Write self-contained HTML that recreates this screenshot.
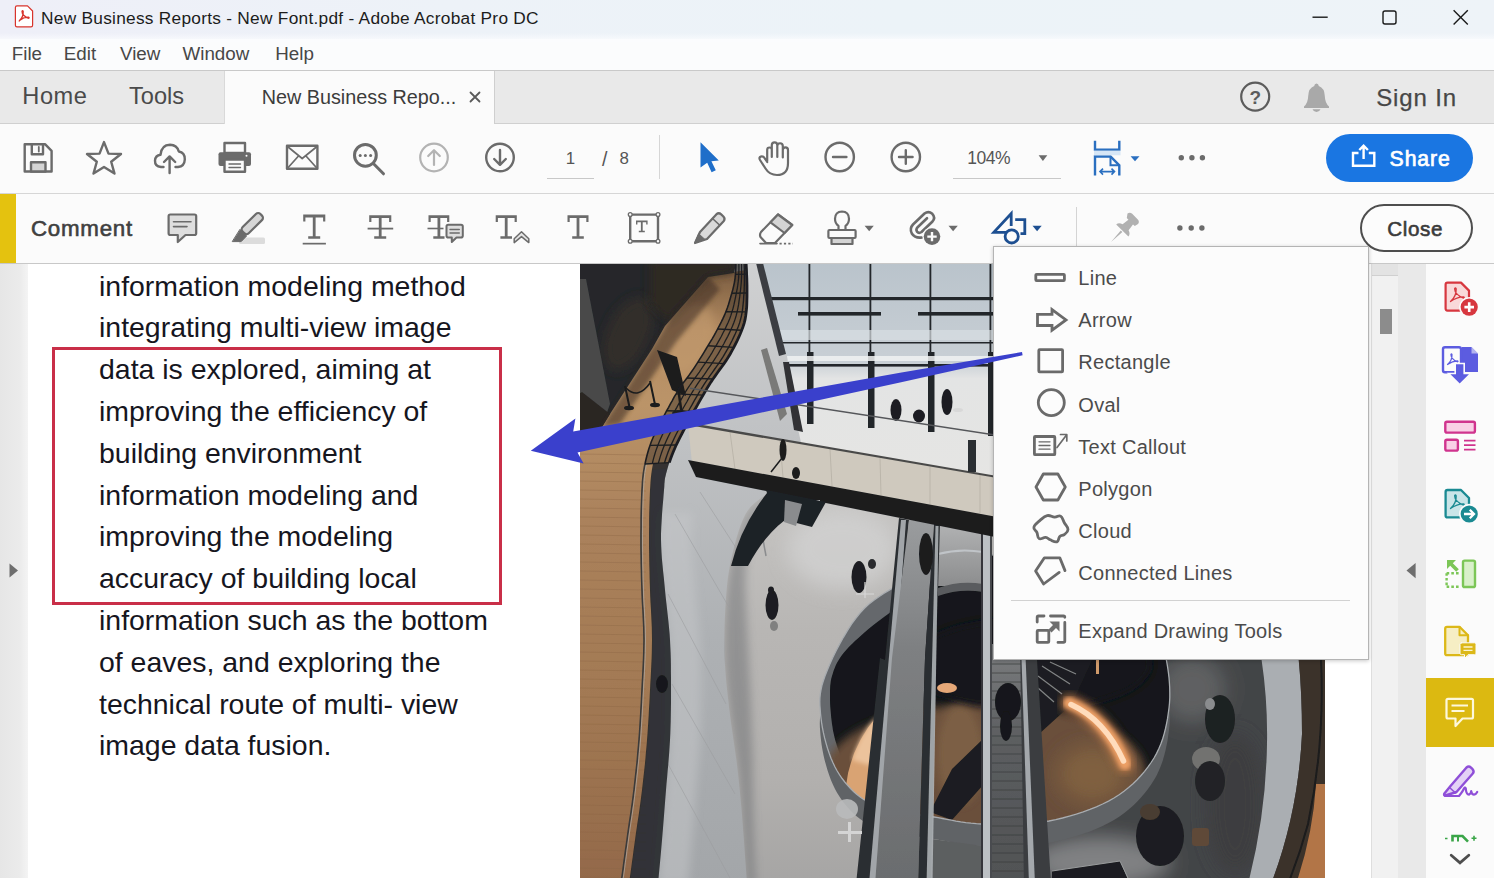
<!DOCTYPE html>
<html lang="en">
<head>
<meta charset="utf-8">
<title>New Business Reports - New Font.pdf - Adobe Acrobat Pro DC</title>
<style>
*{box-sizing:border-box;margin:0;padding:0}
html,body{width:1494px;height:878px;overflow:hidden;background:#fff}
body{font-family:"Liberation Sans",sans-serif;color:#3a3a3a;position:relative}
.abs{position:absolute}
.t{position:absolute;white-space:nowrap;line-height:1}
svg{position:absolute;overflow:visible}
#titlebar{left:0;top:0;width:1494px;height:39px;background:linear-gradient(90deg,#eeeff8 0%,#edf2f8 30%,#ecf3f8 60%,#eef3f8 100%)}
#titlefade{left:0;top:33px;width:1494px;height:9px;background:linear-gradient(180deg,rgba(251,252,254,0) 0%,#fbfcfe 100%)}
#menubar{left:0;top:39px;width:1494px;height:31px;background:#fbfcfd}
#menuline{left:0;top:70px;width:1494px;height:1px;background:#c9c9c9}
#tabbar{left:0;top:71px;width:1494px;height:53px;background:#e9e9e9}
#tabactive{left:224px;top:71px;width:271px;height:54px;background:#fbfbfb;border-left:1px solid #d9d9d9;border-right:1px solid #cfcfcf}
#tabline{left:0;top:123px;width:224px;height:1px;background:#d0d0d0}
#tabline2{left:495px;top:123px;width:999px;height:1px;background:#d0d0d0}
#tb1{left:0;top:124px;width:1494px;height:69px;background:#fbfbfb}
#tb1line{left:0;top:193px;width:1494px;height:1px;background:#d6d6d6}
#tb2{left:0;top:194px;width:1494px;height:69px;background:#fbfbfb}
#tb2line{left:0;top:263px;width:1494px;height:1px;background:#c8c8c8}
#ystrip{left:0;top:194px;width:16px;height:69px;background:#e4c20f}
#leftpane{left:0;top:264px;width:28px;height:614px;background:linear-gradient(90deg,#e6e6e6 0%,#ebebeb 70%,#f4f4f4 100%)}
#page{left:28px;top:264px;width:1343px;height:614px;background:#fff}
#doc{left:99px;top:265.7px;font-size:28.45px;line-height:41.8px;color:#16161e;white-space:nowrap}
#redrect{left:51.5px;top:347px;width:450.5px;height:258px;border:3px solid #c92f48}
#scroll{left:1371px;top:264px;width:27px;height:614px;background:#f1f1f1;border-left:1px solid #dedede}
#scrollbtn{left:1372px;top:264px;width:26px;height:12px;background:#e3e3e3;border-bottom:1px solid #d0d0d0}
#thumb{left:1380px;top:309px;width:12px;height:25px;background:#8c8c8c}
#rcollapse{left:1398px;top:264px;width:28px;height:614px;background:#e9e9e9}
#rpane{left:1426px;top:264px;width:68px;height:614px;background:#fbfbfb}
#rsel{left:1425.5px;top:677.5px;width:69px;height:69px;background:#dcb911}
#menu{left:993px;top:246px;width:376px;height:414px;background:#fcfcfc;border:1px solid #b4b4b4;box-shadow:0 1px 4px rgba(0,0,0,.22)}
#share{left:1326px;top:134px;width:147px;height:48px;border-radius:24px;background:#1a76e2}
#close{left:1360px;top:204px;width:113px;height:48px;border-radius:24px;border:2px solid #4e4e4e;background:#fcfcfc}

</style>
</head>
<body>
<div class="abs" id="titlebar"></div>
<div class="abs" id="menubar"></div>
<div class="abs" id="titlefade"></div>
<div class="abs" id="menuline"></div>
<div class="abs" id="tabbar"></div>
<div class="abs" id="tabactive"></div>
<div class="abs" id="tabline"></div>
<div class="abs" id="tabline2"></div>
<div class="abs" id="tb1"></div>
<div class="abs" id="tb1line"></div>
<div class="abs" id="tb2"></div>
<div class="abs" id="tb2line"></div>
<div class="abs" id="ystrip"></div>
<div class="abs" style="left:547px;top:178px;width:47px;height:1px;background:#c8c8c8"></div>
<div class="abs" style="left:659px;top:135px;width:1px;height:44px;background:#d6d6d6"></div>
<div class="abs" style="left:953px;top:178px;width:108px;height:1px;background:#c8c8c8"></div>
<div class="abs" id="share"></div>
<div class="abs" style="left:1076px;top:207px;width:1px;height:40px;background:#d4d4d4"></div>
<div class="abs" id="close"></div>

<div class="t" style="left:41.0px;top:9.56px;font-size:17.3px;color:#1c1c1c;letter-spacing:0.27px">New Business Reports - New Font.pdf - Adobe Acrobat Pro DC</div>
<div class="t" style="left:11.8px;top:44.99px;font-size:18.8px;color:#474747">File</div>
<div class="t" style="left:63.8px;top:44.99px;font-size:18.8px;color:#474747">Edit</div>
<div class="t" style="left:120.0px;top:44.99px;font-size:18.8px;color:#474747">View</div>
<div class="t" style="left:182.5px;top:44.99px;font-size:18.8px;color:#474747">Window</div>
<div class="t" style="left:275.3px;top:44.99px;font-size:18.8px;color:#474747">Help</div>
<div class="t" style="left:22.3px;top:85.42px;font-size:23.6px;color:#4a4a4a;letter-spacing:0.55px">Home</div>
<div class="t" style="left:129.0px;top:85.42px;font-size:23.6px;color:#4a4a4a">Tools</div>
<div class="t" style="left:261.7px;top:88.44px;font-size:19.8px;color:#3c3c3c">New Business Repo...</div>
<div class="t" style="left:1376.2px;top:86.18px;font-size:24px;color:#474747;letter-spacing:0.85px;-webkit-text-stroke:0.25px #474747">Sign In</div>
<div class="t" style="left:565.8px;top:151.09px;font-size:16.9px;color:#555">1</div>
<div class="t" style="left:602.0px;top:149.69px;font-size:19.5px;color:#555">/</div>
<div class="t" style="left:619.4px;top:151.09px;font-size:16.9px;color:#555">8</div>
<div class="t" style="left:967.2px;top:150.49px;font-size:17.5px;color:#555;letter-spacing:-0.5px">104%</div>
<div class="t" style="left:1389.6px;top:147.75px;font-size:21.2px;color:#fff;letter-spacing:0.9px;-webkit-text-stroke:0.7px #fff">Share</div>
<div class="t" style="left:31.0px;top:217.62px;font-size:22.3px;color:#404040;letter-spacing:0.75px;-webkit-text-stroke:0.6px #404040">Comment</div>
<div class="t" style="left:1387.3px;top:218.86px;font-size:20.6px;color:#3a3a3a;letter-spacing:0.6px;-webkit-text-stroke:0.6px #3a3a3a">Close</div>
<svg id="icons" style="left:0;top:0" width="1494" height="878" viewBox="0 0 1494 878" fill="none" stroke-linejoin="round" stroke-linecap="round">
<!-- title icon -->
<path d="M17,5.8 H27.5 L32.6,11 V25.2 Q32.6,26.8 31,26.8 H17 Q15.4,26.8 15.4,25.2 V7.4 Q15.4,5.8 17,5.8 Z" fill="#fff" stroke="#d8342c" stroke-width="1.2"/>
<path d="M19.5,20.5 Q23.5,17 23.2,11.2 Q22.6,10 22,11.2 Q22,15.5 28.5,18.3 Q29.8,17.6 28.5,17.2 Q24,17 19.5,20.5 Q19,21.6 19.5,20.5 Z" stroke="#d8342c" stroke-width="1.3"/>
<!-- window controls -->
<g stroke="#1a1a1a" stroke-width="1.4" stroke-linecap="butt">
<line x1="1312.5" y1="17.2" x2="1327.7" y2="17.2"/>
<rect x="1383" y="11" width="13" height="13" rx="2"/>
<path d="M1453.6,10.2 L1467.8,24.6 M1467.8,10.2 L1453.6,24.6"/>
</g>
<!-- tab close x -->
<path d="M470.5,92.5 L479.5,101.5 M479.5,92.5 L470.5,101.5" stroke="#5a5a5a" stroke-width="1.8"/>
<!-- help -->
<circle cx="1255.2" cy="96.6" r="14" stroke="#5c5c5c" stroke-width="2.2"/>
<text x="1255.2" y="103.8" font-family="Liberation Sans, sans-serif" font-size="19" font-weight="bold" fill="#5c5c5c" stroke="none" text-anchor="middle">?</text>
<!-- bell -->
<path d="M1316.5,83.5 Q1318.5,83.5 1318.8,86 Q1324.5,88 1324.8,96 Q1325,103 1329,106.5 V108 H1304 V106.5 Q1308,103 1308.2,96 Q1308.5,88 1314.2,86 Q1314.5,83.5 1316.5,83.5 Z" fill="#a9a9a9"/>
<path d="M1312.5,109.3 H1320.5 Q1319.5,112 1316.5,112 Q1313.5,112 1312.5,109.3 Z" fill="#a9a9a9"/>

<!-- ===== toolbar 1 ===== -->
<g stroke="#6b6b6b" stroke-width="2.4">
<!-- save -->
<path d="M24.7,144.2 H45 L51.6,150.8 V171.5 H24.7 Z"/>
<path d="M31.8,144.2 V154.2 H43 V144.2"/>
<rect x="31" y="162.2" width="14.5" height="9.3" fill="#d4d4d4"/>
<line x1="38.8" y1="147" x2="38.8" y2="151.5" stroke-width="1.8"/>
<!-- star -->
<polygon points="104.0,142.1 108.5,153.6 121.0,154.0 111.2,161.8 114.5,173.6 104.0,166.9 93.5,173.6 96.8,161.8 87.0,154.0 99.5,153.6"/>
<!-- cloud upload -->
<path d="M163.5,167 H161 Q154.8,166.5 155,160.5 Q155.4,155.5 160.5,154.8 Q161.5,145 170,144.8 Q177,145 178.8,151.5 Q185,152.5 184.8,159.5 Q184.5,166.5 178,167 H175.5"/>
<path d="M169.6,173 V157 M164,162 L169.6,156.4 L175.2,162"/>
<!-- printer -->
<rect x="224.5" y="143" width="20.5" height="10"/>
<path d="M220.5,152.2 H249 Q251,152.2 251,154.2 V164 Q251,166 249,166 H220.5 Q218.5,166 218.5,164 V154.2 Q218.5,152.2 220.5,152.2 Z" fill="#6b6b6b" stroke="none"/>
<rect x="224.5" y="159.5" width="20.5" height="12.2" fill="#fbfbfb"/>
<path d="M229,164 H240.5 M229,167.5 H240.5" stroke-width="1.4"/>
<circle cx="246.5" cy="155.8" r="1" fill="#fbfbfb" stroke="none"/>
<!-- mail -->
<rect x="287" y="145.8" width="30.4" height="23"/>
<path d="M287.5,146.5 L302.2,158.5 L317,146.5 M287.5,168.3 L298.5,156 M317,168.3 L306,156" stroke-width="1.7"/>
<!-- search -->
<circle cx="365.4" cy="155.3" r="10.9" stroke-width="3"/>
<path d="M373.6,163.8 L383.5,173.8" stroke-width="3"/>
<g fill="#6b6b6b" stroke="none"><circle cx="360.2" cy="155.5" r="1.5"/><circle cx="365.4" cy="155.5" r="1.5"/><circle cx="370.6" cy="155.5" r="1.5"/></g>
<!-- down circle -->
<circle cx="500" cy="157.5" r="13.8"/>
<path d="M500,150 V164.5 M494.2,159 L500,164.8 L505.8,159"/>
<!-- hand -->
<path d="M767.2,161 V149.8 A2.3,2.3 0 0 1 771.8,149.8 V157 M771.8,157 V145.2 A2.75,2.75 0 0 1 777.3,145.2 V157 M777.3,157 V146 A2.75,2.75 0 0 1 782.8,146 V157.5 M782.8,157.5 V150 A2.6,2.6 0 0 1 788,150 V163 Q788,175 777,175 Q769.5,175 765.5,168.5 L760,160 Q758.6,157.4 760.8,156.6 Q763.2,156 764.6,158.2 L767.2,162" stroke-width="2.2"/>
<!-- minus/plus circles -->
<circle cx="839.7" cy="157" r="14.2"/><path d="M833,157 H846.4"/>
<circle cx="905.8" cy="157" r="14.2"/><path d="M899,157 H912.6 M905.8,150.2 V163.8"/>
</g>
<!-- up circle (disabled) -->
<g stroke="#b3b3b3" stroke-width="2.2"><circle cx="434" cy="157.5" r="13.8"/><path d="M434,165 V150.5 M428.2,156 L434,150.2 L439.8,156"/></g>
<!-- pointer -->
<path d="M700.5,142.2 V167.4 L707.2,162.8 L711.6,172.2 L715.8,170.3 L711.4,161.2 L718.8,160.4 Z" fill="#1f6ec9"/>
<!-- zoom dropdown arrow -->
<path d="M1038.6,155.2 H1047.3 L1042.9,161 Z" fill="#6b6b6b"/>
<!-- fit icon -->
<g stroke="#2a6fc0" stroke-width="2.4" stroke-linecap="butt" stroke-linejoin="miter">
<path d="M1095,140.7 V149.6 H1119.3 V140.7"/>
<path d="M1095,175.6 V156.5 H1110.5 L1119.3,165.3 V175.6"/>
<path d="M1110.5,156.5 V165.3 H1119.3" stroke-width="2"/>
<path d="M1100,171.6 H1114.5 M1103,168.6 L1100,171.6 L1103,174.6 M1111.5,168.6 L1114.5,171.6 L1111.5,174.6" stroke-width="1.6"/>
</g>
<rect x="1094" y="150.8" width="26.5" height="4.5" fill="#d6e6f6"/>
<path d="M1130.6,156.2 H1139.5 L1135,161.2 Z" fill="#2a6fc0"/>
<g fill="#6b6b6b"><circle cx="1181.3" cy="157.8" r="2.7"/><circle cx="1191.9" cy="157.8" r="2.7"/><circle cx="1202.4" cy="157.8" r="2.7"/></g>
<!-- share icon -->
<g stroke="#fff" stroke-width="2.4" stroke-linecap="butt" stroke-linejoin="miter">
<path d="M1358.5,153 H1353 V165.8 H1374.3 V153 H1368.8"/>
<path d="M1363.6,159 V146.5 M1359.3,150 L1363.6,145.7 L1367.9,150" />
</g>

<!-- ===== toolbar 2 ===== -->
<g stroke="#6b6b6b" stroke-width="2.2">
<!-- comment bubble -->
<path d="M170.3,214.5 H194.5 Q196.2,214.5 196.2,216.2 V233.3 Q196.2,235 194.5,235 H185.5 L177.8,242 V235 H170.3 Q168.6,235 168.6,233.3 V216.2 Q168.6,214.5 170.3,214.5 Z" fill="#dedede"/>
<path d="M173.5,221.8 H191 M173.5,226.6 H187" stroke-width="1.6"/>
<!-- highlighter -->
<rect x="239" y="237.6" width="26" height="6.4" rx="1.5" fill="#dcdcdc" stroke="none"/>
<rect x="239.8" y="219.3" width="25" height="8.6" rx="3.2" fill="#d6d6d6" transform="rotate(-44.5 252.3 223.6)"/>
<path d="M240.2,229.6 L246.6,236 L241.2,241.6 H232.6 Z" fill="#6b6b6b" stroke-width="1"/>
<!-- pencil -->
<path d="M700,232 L716.5,214.2 Q718.8,212.2 721.2,214.4 L723.4,216.5 Q725.6,218.9 723.6,221.2 L707,239 L695,243 Z" fill="#dadada"/>
<path d="M712.5,218.5 L719.5,225" stroke-width="1.6"/>
<path d="M699,234 L705,239.5 L695,243 Z" fill="#6b6b6b" stroke-width="1"/>
<!-- eraser -->
<path d="M761,232 L778,214.5 L792.2,225 L775,243 H766 L760.5,237 Q759.3,234.5 761,232 Z" fill="#fbfbfb"/>
<path d="M770.5,222.3 L778,214.5 L792.2,225 L784.5,233 Z" fill="#d4d4d4"/>
<path d="M760,243.6 H777" stroke-width="1.6"/><path d="M779.5,243.6 H793" stroke-width="1.6" stroke-dasharray="2.2 2.2" stroke-linecap="butt"/>
<!-- stamp -->
<path d="M838.5,230 V226 Q835,223.5 835,218.8 Q835.2,211.6 842,211.5 Q848.8,211.6 849,218.8 Q849,223.5 845.5,226 V230"/>
<rect x="828.4" y="230" width="27.2" height="8" rx="1"/>
<rect x="831.5" y="238" width="21" height="6" fill="#d4d4d4"/>
<!-- paperclip -->
<path d="M922,237.5 Q915,238.5 911.8,233.5 Q909.3,228.5 913,224.5 L924.5,213.5 Q928.5,210.5 932.3,213.8 Q935.8,217.5 932.5,221.5 L921.5,232 Q918.8,233.8 917,231.6 Q915.6,229.3 917.6,227.2 L927,218.2" stroke-width="2.6"/>
</g>
<circle cx="932" cy="236.6" r="9.6" fill="#fbfbfb"/><circle cx="932" cy="236.6" r="8.3" fill="#6b6b6b"/>
<path d="M927.3,236.6 H936.7 M932,231.9 V241.3" stroke="#fbfbfb" stroke-width="2.4" stroke-linecap="butt"/>
<g fill="#6b6b6b"><path d="M864.6,225.8 H873.8 L869.2,231.2 Z"/><path d="M948.5,225.8 H957.8 L953.1,231.2 Z"/></g>
<!-- T icons: serif T glyph drawn by path -->
<g fill="#6b6b6b" stroke="none">
<path id="bigT" d="M303.2,214.6 H325.3 V221.4 H323.1 V217.4 H315.6 V236.2 H320.2 V238.7 H308.2 V236.2 H312.8 V217.4 H305.4 V221.4 H303.2 Z"/>
<rect x="302.7" y="242.8" width="23.2" height="1.7"/>
<path d="M369.2,215.2 H391.3 V222 H389.1 V218 H381.6 V236.2 H386.2 V238.7 H374.2 V236.2 H378.8 V218 H371.4 V222 H369.2 Z"/>
<rect x="367.6" y="227.7" width="25.6" height="1.8"/>
<path d="M428.5,215.2 H449.3 V222 H447.1 V218 H440.3 V236.2 H444.5 V238.7 H433.3 V236.2 H437.5 V218 H430.7 V222 H428.5 Z"/>
<rect x="427.5" y="227.7" width="16" height="1.6"/>
<path d="M495.7,215.2 H516.8 V222 H514.6 V218 H507.6 V236.2 H512 V238.7 H500.4 V236.2 H504.8 V218 H497.9 V222 H495.7 Z"/>
<path d="M567.5,215.2 H588.5 V222 H586.3 V218 H579.4 V236.2 H583.8 V238.7 H572.2 V236.2 H576.6 V218 H569.7 V222 H567.5 Z"/>
<path d="M636,220.6 H647.6 V224.6 H646.2 V222.2 H642.7 V230.8 H644.8 V232.3 H638.8 V230.8 H640.9 V222.2 H637.4 V224.6 H636 Z"/>
</g>
<!-- note on T -->
<path d="M448.3,224.8 H461 Q462.8,224.8 462.8,226.6 V235.8 Q462.8,237.6 461,237.6 H456.5 L451.8,242 V237.6 H448.3 Q446.5,237.6 446.5,235.8 V226.6 Q446.5,224.8 448.3,224.8 Z" fill="#dedede" stroke="#6b6b6b" stroke-width="2"/>
<path d="M450,229.5 H459.3 M450,233 H459.3" stroke="#6b6b6b" stroke-width="1.4"/>
<!-- caret on T -->
<path d="M514.2,242.6 V238.8 L521.5,231.8 L528.8,238.8 V242.6 L521.5,236.6 Z" fill="#e4e4e4" stroke="#6b6b6b" stroke-width="1.5"/>
<!-- T box -->
<rect x="630.2" y="214.6" width="27.8" height="26.6" stroke="#6b6b6b" stroke-width="2.4"/>
<g fill="#fbfbfb" stroke="#6b6b6b" stroke-width="1.3"><circle cx="630.2" cy="214.6" r="1.9"/><circle cx="658" cy="214.6" r="1.9"/><circle cx="630.2" cy="241.2" r="1.9"/><circle cx="658" cy="241.2" r="1.9"/></g>
<!-- shapes (active) -->
<g stroke="#1d4f91" stroke-width="2.8" stroke-linejoin="miter" stroke-linecap="butt">
<path d="M1010.8,232.4 H993.8 L1011.2,213.6 V226"/>
<path d="M1015.2,219.6 H1024.8 V233.6 H1020.5"/>
<circle cx="1011.7" cy="236.4" r="6.6" fill="#fbfbfb"/>
</g>
<path d="M1032.5,225.8 H1041.7 L1037.1,231.2 Z" fill="#1d4f91"/>
<!-- pin -->
<g fill="#b1b1b1" stroke="none">
<path d="M1127.5,213.5 Q1130,211.8 1132.2,213.8 L1137.8,219.4 Q1139.8,221.6 1138,224 L1134.8,226 L1133,224.4 L1128.6,230.2 Q1130.6,234 1128.4,236.6 L1116.2,224.4 Q1118.8,222.2 1122.6,224.2 L1128.4,219.8 L1126.8,218 Z"/>
<path d="M1120.8,230.4 L1122.4,232 L1111,242 Z"/>
</g>
<g fill="#6b6b6b"><circle cx="1179.9" cy="228" r="2.7"/><circle cx="1191.2" cy="228" r="2.7"/><circle cx="1201.9" cy="228" r="2.7"/></g>

</svg>

<!-- content -->
<div class="abs" id="leftpane"></div>
<div class="abs" id="page"></div>
<div class="abs" id="doc">information modeling method<br>integrating multi-view image<br>data is explored, aiming at<br>improving the efficiency of<br>building environment<br>information modeling and<br>improving the modeling<br>accuracy of building local<br>information such as the bottom<br>of eaves, and exploring the<br>technical route of multi- view<br>image data fusion.</div>
<div class="abs" id="redrect"></div>
<svg id="photo" style="left:580px;top:264px" width="745" height="614" viewBox="0 0 745 614">
<defs>
<clipPath id="pc"><rect width="745" height="614"/></clipPath>
<clipPath id="pitc"><rect x="447" y="380" width="300" height="240"/></clipPath>
<filter id="b1" x="-5%" y="-5%" width="110%" height="110%"><feGaussianBlur stdDeviation="0.6"/></filter>
<filter id="b2" x="-10%" y="-10%" width="120%" height="120%"><feGaussianBlur stdDeviation="2"/></filter>
<filter id="b4" x="-20%" y="-20%" width="140%" height="140%"><feGaussianBlur stdDeviation="4"/></filter>
<filter id="b10" x="-30%" y="-30%" width="160%" height="160%"><feGaussianBlur stdDeviation="10"/></filter>
<linearGradient id="gwood" x1="0" y1="0" x2="0" y2="1"><stop offset="0" stop-color="#7a5c40"/><stop offset="0.1" stop-color="#b48c62"/><stop offset="0.22" stop-color="#bb9468"/><stop offset="0.4" stop-color="#ab825c"/><stop offset="0.7" stop-color="#a27953"/><stop offset="1" stop-color="#93694a"/></linearGradient>
<linearGradient id="gwall" x1="0" y1="0" x2="0" y2="1"><stop offset="0" stop-color="#d0d1d2"/><stop offset="0.28" stop-color="#c0c2c4"/><stop offset="0.6" stop-color="#aeb1b4"/><stop offset="1" stop-color="#a3a6a9"/></linearGradient>
<linearGradient id="gfloor" x1="0" y1="0" x2="0" y2="1"><stop offset="0" stop-color="#c8c7c5"/><stop offset="0.4" stop-color="#b8b6b4"/><stop offset="0.75" stop-color="#b2b0ae"/><stop offset="1" stop-color="#a6a5a4"/></linearGradient>
<linearGradient id="gglass" x1="0" y1="0" x2="0" y2="1"><stop offset="0" stop-color="#b9c3cb"/><stop offset="0.36" stop-color="#c8cfd5"/><stop offset="0.42" stop-color="#e3e4e4"/><stop offset="1" stop-color="#e7e6e3"/></linearGradient>
<linearGradient id="gsteps" x1="0" y1="0" x2="0" y2="1"><stop offset="0" stop-color="#9a9c9e"/><stop offset="0.35" stop-color="#7e8082"/><stop offset="1" stop-color="#6a6c6e"/></linearGradient>
<linearGradient id="gpanel" x1="0" y1="0" x2="0" y2="1"><stop offset="0" stop-color="#b2b3b4"/><stop offset="1" stop-color="#8c8d8e"/></linearGradient>
<radialGradient id="gpitwood" cx="0.4" cy="0.7" r="0.65"><stop offset="0" stop-color="#94704c"/><stop offset="0.6" stop-color="#6e5238"/><stop offset="1" stop-color="#241f1c"/></radialGradient>
</defs>
<g clip-path="url(#pc)">
<g filter="url(#b1)">
<rect x="-5" y="-5" width="755" height="624" fill="#9a9c9e"/>
<polygon points="170,-5 750,-5 750,280 215,200" fill="url(#gglass)"/>
<polygon points="140,200 420,240 420,620 150,620" fill="url(#gfloor)"/>
<ellipse cx="262" cy="285" rx="55" ry="40" fill="#d4d4d4" opacity="0.7" filter="url(#b10)"/>
<polygon points="187.0,229.0 184.2,231.6 181.3,233.8 178.4,236.0 175.6,238.2 172.7,240.7 170.0,243.5 167.4,246.9 165.0,251.0 162.7,255.9 160.5,261.5 158.4,267.7 156.4,274.2 154.6,281.0 152.9,287.8 151.3,294.6 150.0,301.0 148.9,307.2 147.9,313.5 147.2,319.8 146.6,326.0 146.1,332.2 145.7,338.5 145.3,344.8 145.0,351.0 144.7,357.2 144.5,363.5 144.4,369.8 144.4,376.0 144.4,382.2 144.5,388.5 144.7,394.8 145.0,401.0 145.4,407.2 145.9,413.5 146.4,419.8 147.1,426.0 147.8,432.2 148.5,438.5 149.2,444.8 150.0,451.0 150.8,457.2 151.7,463.5 152.6,469.8 153.5,476.0 154.4,482.2 155.3,488.5 156.2,494.8 157.0,501.0 157.7,507.1 158.4,513.1 159.0,518.9 159.6,524.8 160.2,530.9 160.8,537.2 161.4,543.8 162.0,551.0 162.6,558.7 163.2,566.9 163.9,575.5 164.5,584.3 165.1,593.3 165.8,602.3 166.4,611.2 167.0,620.0 175.6,620.0 175.1,611.2 174.7,602.3 174.3,593.3 174.0,584.3 173.8,575.5 173.6,566.9 173.4,558.7 173.3,551.0 173.2,543.8 173.1,537.2 173.1,530.9 173.0,524.8 173.0,518.9 173.0,513.1 172.9,507.1 172.9,501.0 172.8,494.8 172.6,488.5 172.4,482.2 172.2,476.0 172.0,469.8 171.7,463.5 171.5,457.2 171.4,451.0 171.2,444.8 170.9,438.5 170.6,432.2 170.3,426.0 170.0,419.8 169.7,413.5 169.3,407.2 169.0,401.0 168.7,394.8 168.4,388.5 168.1,382.2 167.7,376.0 167.4,369.8 167.1,363.5 166.8,357.2 166.5,351.0 166.3,344.8 166.0,338.5 165.7,332.2 165.5,326.0 165.4,319.8 165.4,313.5 165.7,307.2 166.1,301.0 166.7,294.6 167.6,287.8 168.6,281.0 169.8,274.2 171.2,267.7 172.7,261.5 174.5,255.9 176.4,251.0 178.6,246.9 180.9,243.5 183.5,240.7 186.2,238.2 188.9,236.0 191.7,233.8 194.4,231.6 197.1,229.0" fill="#4c4f54" opacity="0.34" filter="url(#b4)"/>
<g fill="#23262a">
<rect x="190" y="33" width="560" height="3.2"/>
<rect x="218" y="48" width="83" height="3.6"/><rect x="338" y="48" width="80" height="3.6"/>
<rect x="196" y="78" width="554" height="1.5"/>
<rect x="203" y="100" width="547" height="2.6"/>
<rect x="228.5" y="0" width="1.8" height="90"/><rect x="227" y="88" width="6.5" height="72"/>
<rect x="289.5" y="0" width="1.8" height="90"/><rect x="288" y="88" width="6.5" height="76"/>
<rect x="349.5" y="0" width="1.8" height="90"/><rect x="348" y="88" width="6.5" height="80"/>
<rect x="409.5" y="0" width="1.8" height="90"/><rect x="408" y="88" width="6.5" height="84"/>
</g>
<rect x="200" y="92" width="550" height="5" fill="#f0f2f2" opacity="0.85"/>
<rect x="196" y="66" width="554" height="10" fill="#d9dee2" opacity="0.7"/>
<ellipse cx="316" cy="146" rx="5.5" ry="11" fill="#1c1e22"/><ellipse cx="339" cy="152" rx="6" ry="6.5" fill="#1c1e22"/><ellipse cx="367" cy="138" rx="5.5" ry="13" fill="#1c1e22"/><ellipse cx="378" cy="146" rx="5" ry="2" fill="#d8d8d8"/>
<polygon points="166.0,-5.0 176.0,-5.0 207.0,92.0 218.0,165.0 232.0,228.0 187.0,229.0 184.2,231.6 181.3,233.8 178.4,236.0 175.6,238.2 172.7,240.7 170.0,243.5 167.4,246.9 165.0,251.0 162.7,255.9 160.5,261.5 158.4,267.7 156.4,274.2 154.6,281.0 152.9,287.8 151.3,294.6 150.0,301.0 148.9,307.2 147.9,313.5 147.2,319.8 146.6,326.0 146.1,332.2 145.7,338.5 145.3,344.8 145.0,351.0 144.7,357.2 144.5,363.5 144.4,369.8 144.4,376.0 144.4,382.2 144.5,388.5 144.7,394.8 145.0,401.0 145.4,407.2 145.9,413.5 146.4,419.8 147.1,426.0 147.8,432.2 148.5,438.5 149.2,444.8 150.0,451.0 150.8,457.2 151.7,463.5 152.6,469.8 153.5,476.0 154.4,482.2 155.3,488.5 156.2,494.8 157.0,501.0 157.7,507.1 158.4,513.1 159.0,518.9 159.6,524.8 160.2,530.9 160.8,537.2 161.4,543.8 162.0,551.0 162.6,558.7 163.2,566.9 163.9,575.5 164.5,584.3 165.1,593.3 165.8,602.3 166.4,611.2 167.0,620.0 78.0,620.0 78.0,620.0 78.5,614.5 79.0,609.1 79.5,603.8 80.0,598.4 80.5,592.9 81.0,587.4 81.5,581.8 82.0,576.0 82.5,570.0 83.0,563.9 83.5,557.7 84.0,551.4 84.5,545.0 85.0,538.6 85.5,532.3 86.0,526.0 86.5,519.8 87.1,513.5 87.6,507.2 88.2,501.0 88.7,494.8 89.2,488.5 89.6,482.2 90.0,476.0 90.3,469.8 90.5,463.5 90.7,457.2 90.8,451.0 90.9,444.8 91.0,438.5 91.0,432.2 91.0,426.0 91.0,419.8 91.0,413.5 90.9,407.2 90.9,401.0 90.8,394.8 90.6,388.5 90.3,382.2 90.0,376.0 89.6,369.8 89.0,363.5 88.4,357.2 87.7,351.0 87.0,344.8 86.3,338.5 85.6,332.2 85.0,326.0 84.4,319.8 83.8,313.5 83.1,307.2 82.5,301.0 81.9,294.8 81.5,288.5 81.2,282.2 81.0,276.0 81.0,269.5 81.3,262.7 81.7,255.8 82.1,248.9 82.6,242.3 83.2,236.1 83.6,230.6 84.0,226.0 84.3,222.4 84.4,219.8 84.6,217.9 84.7,216.4 84.9,215.1 85.1,213.8 85.5,212.2 86.0,210.0 86.7,207.4 87.5,204.6 88.3,201.7 89.3,198.6 90.4,195.5 91.5,192.3 92.7,189.2 94.0,186.0 95.4,182.8 96.9,179.5 98.6,176.1 100.3,172.8 102.1,169.4 103.8,166.1 105.4,163.0 107.0,160.0 108.5,157.2 109.8,154.6 111.2,152.1 112.5,149.8 113.8,147.4 115.2,145.0 116.5,142.6 118.0,140.0 119.5,137.4 121.0,134.7 122.5,132.1 124.1,129.4 125.7,126.6 127.4,123.8 129.1,121.0 131.0,118.0 133.1,114.9 135.3,111.7 137.6,108.5 140.1,105.1 142.5,101.8 144.8,98.5 147.0,95.2 149.0,92.0 150.8,88.9 152.6,85.7 154.2,82.6 155.8,79.5 157.3,76.5 158.6,73.5 159.9,70.7 161.0,68.0 162.0,65.5 162.8,63.2 163.6,61.1 164.2,59.1 164.7,57.0 165.2,54.9 165.6,52.5 166.0,50.0 166.3,47.2 166.6,44.4 166.8,41.4 166.9,38.2 166.9,35.0 167.0,31.8 167.0,28.4 167.0,25.0 167.0,21.5 166.9,17.9 166.8,14.1 166.6,10.3 166.5,6.5 166.3,2.6 166.1,-1.2 166.0,-5.0" fill="url(#gwall)"/>
<polygon points="82.2,248.5 81.5,259.5 81.0,270.4 81.1,281.4 81.8,292.3 82.7,303.2 83.8,314.1 84.9,325.0 86.0,335.9 87.2,346.8 88.4,357.7 89.5,368.6 90.2,379.5 90.6,390.5 90.9,401.4 91.0,412.4 91.0,423.3 91.0,434.3 90.9,445.2 90.7,456.2 90.4,467.2 89.9,478.1 89.2,489.0 88.3,499.9 87.3,510.9 86.4,521.8 85.5,532.7 84.6,543.6 83.8,554.5 82.9,565.4 82.0,576.4 81.0,587.3 80.0,598.2 79.0,609.1 78.0,620.0 108.0,620.0 109.0,609.1 110.0,598.2 111.0,587.3 112.0,576.4 112.9,565.4 113.8,554.5 114.6,543.6 115.5,532.7 116.4,521.8 117.3,510.9 118.3,499.9 119.2,489.0 119.9,478.1 120.4,467.2 120.7,456.2 120.9,445.2 121.0,434.3 121.0,423.3 121.0,412.4 120.9,401.4 120.6,390.5 120.2,379.5 119.5,368.6 118.4,357.7 117.2,346.8 116.0,335.9 114.9,325.0 113.8,314.1 112.7,303.2 111.8,292.3 111.1,281.4 111.0,270.4 111.5,259.5 112.2,248.5" fill="#c6c8ca" opacity="0.5" filter="url(#b4)"/>
<g stroke="#9a9c9e" stroke-width="0.8" opacity="0.7"><line x1="95" y1="250" x2="150" y2="345"/><line x1="88" y1="330" x2="146" y2="440"/><line x1="92" y1="420" x2="155" y2="530"/><line x1="88" y1="500" x2="150" y2="614"/><line x1="120" y1="228" x2="160" y2="290"/></g>
<polygon points="181,86 187,84 207,150 200,157" fill="#7a7a78"/>
<polygon points="175,-5 182,-5 206,90 199,92" fill="#3a3e42"/><polygon points="203,98 209,98 223,168 214,166" fill="#303336"/>
<polygon points="128.0,12.0 154.0,8.0 166.0,6.0 165.5,6.5 165.6,10.3 165.8,14.1 165.9,17.9 166.0,21.5 166.0,25.0 166.0,28.4 166.0,31.8 165.9,35.0 165.9,38.2 165.8,41.4 165.6,44.4 165.3,47.2 165.0,50.0 164.6,52.5 164.2,54.9 163.7,57.0 163.2,59.1 162.6,61.1 161.8,63.2 161.0,65.5 160.0,68.0 158.9,70.7 157.6,73.5 156.3,76.5 154.8,79.5 153.2,82.6 151.6,85.7 149.8,88.9 148.0,92.0 146.0,95.2 143.8,98.5 141.5,101.8 139.1,105.1 136.6,108.5 134.3,111.7 132.1,114.9 130.0,118.0 128.1,121.0 126.4,123.8 124.7,126.6 123.1,129.4 121.5,132.1 120.0,134.7 118.5,137.4 117.0,140.0 115.5,142.6 114.2,145.0 112.8,147.4 111.5,149.8 110.2,152.1 108.8,154.6 107.5,157.2 106.0,160.0 104.4,163.0 102.8,166.1 101.1,169.4 99.3,172.8 97.6,176.1 95.9,179.5 94.4,182.8 93.0,186.0 91.7,189.2 90.5,192.3 89.4,195.5 88.3,198.6 87.3,201.7 86.5,204.6 72.9,205.8 72.5,208.5 72.1,211.4 71.8,214.4 71.5,217.8 71.3,221.6 71.0,226.0 70.8,231.1 70.6,236.8 70.4,243.0 70.2,249.5 70.1,256.2 70.1,262.9 70.0,269.6 70.0,276.0 70.0,282.2 70.1,288.5 70.2,294.8 70.3,301.0 70.5,307.2 70.6,313.5 70.8,319.8 71.0,326.0 71.2,332.2 71.5,338.5 71.9,344.8 72.2,351.0 72.5,357.2 72.8,363.5 72.9,369.8 73.0,376.0 72.9,382.2 72.8,388.5 72.6,394.8 72.3,401.0 72.0,407.2 71.7,413.5 71.3,419.8 71.0,426.0 70.7,432.2 70.4,438.5 70.0,444.8 69.7,451.0 69.3,457.2 68.9,463.5 68.5,469.8 68.0,476.0 67.5,482.2 66.9,488.5 66.4,494.8 65.8,501.0 65.1,507.2 64.4,513.5 63.7,519.8 63.0,526.0 62.2,532.3 61.4,538.6 60.5,545.0 59.6,551.4 58.6,557.7 57.7,563.9 56.8,570.0 56.0,576.0 55.2,581.8 54.4,587.4 53.7,592.9 52.9,598.4 52.2,603.8 51.5,609.1 50.7,614.5 50.0,620.0 -5.0,620.0 -5.0,172.0 22.0,163.0 30.0,150.0 72.0,85.0 85.0,62.0" fill="url(#gwood)"/>
<g stroke="#8a6444" stroke-width="1" opacity="0.35"><line x1="0" y1="190" x2="66" y2="191"/><line x1="0" y1="199" x2="66" y2="200"/><line x1="0" y1="208" x2="66" y2="209"/><line x1="0" y1="217" x2="66" y2="218"/><line x1="0" y1="226" x2="66" y2="227"/><line x1="0" y1="235" x2="66" y2="236"/><line x1="0" y1="244" x2="66" y2="245"/><line x1="0" y1="253" x2="66" y2="254"/><line x1="0" y1="262" x2="66" y2="263"/><line x1="0" y1="271" x2="66" y2="272"/><line x1="0" y1="280" x2="66" y2="281"/><line x1="0" y1="289" x2="66" y2="290"/><line x1="0" y1="298" x2="66" y2="299"/><line x1="0" y1="307" x2="66" y2="308"/><line x1="0" y1="316" x2="66" y2="317"/><line x1="0" y1="325" x2="66" y2="326"/><line x1="0" y1="334" x2="66" y2="335"/><line x1="0" y1="343" x2="66" y2="344"/><line x1="0" y1="352" x2="66" y2="353"/><line x1="0" y1="361" x2="66" y2="362"/><line x1="0" y1="370" x2="66" y2="371"/><line x1="0" y1="379" x2="66" y2="380"/><line x1="0" y1="388" x2="66" y2="389"/><line x1="0" y1="397" x2="66" y2="398"/><line x1="0" y1="406" x2="66" y2="407"/><line x1="0" y1="415" x2="66" y2="416"/><line x1="0" y1="424" x2="66" y2="425"/><line x1="0" y1="433" x2="66" y2="434"/><line x1="0" y1="442" x2="66" y2="443"/><line x1="0" y1="451" x2="66" y2="452"/><line x1="0" y1="460" x2="66" y2="461"/><line x1="0" y1="469" x2="66" y2="470"/><line x1="0" y1="478" x2="66" y2="479"/><line x1="0" y1="487" x2="66" y2="488"/><line x1="0" y1="496" x2="66" y2="497"/><line x1="0" y1="505" x2="66" y2="506"/><line x1="0" y1="514" x2="66" y2="515"/><line x1="0" y1="523" x2="66" y2="524"/><line x1="0" y1="532" x2="66" y2="533"/><line x1="0" y1="541" x2="66" y2="542"/><line x1="0" y1="550" x2="66" y2="551"/><line x1="0" y1="559" x2="66" y2="560"/><line x1="0" y1="568" x2="66" y2="569"/><line x1="0" y1="577" x2="66" y2="578"/><line x1="0" y1="586" x2="66" y2="587"/><line x1="0" y1="595" x2="66" y2="596"/><line x1="0" y1="604" x2="66" y2="605"/><line x1="0" y1="613" x2="66" y2="614"/></g>
<ellipse cx="105" cy="75" rx="26" ry="38" fill="#c49c70" opacity="0.55" transform="rotate(32 105 75)" filter="url(#b4)"/>
<path d="M-5,-5 L157,-5 L154,9 L128,13 L85,62 L72,85 L30,150 L22,163 L-5,174 Z" fill="#25272a"/>
<ellipse cx="48" cy="70" rx="22" ry="40" fill="#332e2a" opacity="0.9" filter="url(#b4)" transform="rotate(25 48 70)"/>
<path d="M70,-5 L157,-5 L154,9 L128,13 L88,58 L70,40 Z" fill="#332c24" opacity="0.8" filter="url(#b4)"/>
<polygon points="-5,15 6,15 30,140 22,163 -5,174" fill="#484a4a"/>
<polygon points="2,128 30,150 22,163 -5,174 -5,132" fill="#2b2624"/>
<path d="M128,13 L85,62 L72,85 L30,150 L22,163 L40,160 L96,78 L140,25 Z" fill="#3a2c20" opacity="0.55" filter="url(#b2)"/>
<polygon points="77,86 97,93 106,132 92,126" fill="#1a1c1f"/>
<rect x="97" y="125" width="2.5" height="24" fill="#1a1c1f" transform="rotate(-8 98 125)"/>
<ellipse cx="100" cy="149" rx="8" ry="3" fill="#2a2a2a"/>
<rect x="44" y="122" width="2" height="22" fill="#1a1c1f" transform="rotate(-12 45 122)"/><ellipse cx="49" cy="144" rx="5" ry="2.2" fill="#1a1c1f"/>
<rect x="69" y="117" width="2" height="24" fill="#1a1c1f" transform="rotate(-12 70 117)"/><ellipse cx="75" cy="141" rx="5" ry="2.2" fill="#1a1c1f"/>
<path d="M46,124 Q58,136 70,119" stroke="#1a1c1f" stroke-width="1.6" fill="none"/>
<polygon points="73.0,200.0 72.4,203.0 71.9,205.8 71.5,208.5 71.1,211.4 70.8,214.4 70.5,217.8 70.3,221.6 70.0,226.0 69.8,231.1 69.6,236.8 69.4,243.0 69.2,249.5 69.1,256.2 69.1,262.9 69.0,269.6 69.0,276.0 69.0,282.2 69.1,288.5 69.2,294.8 69.3,301.0 69.5,307.2 69.6,313.5 69.8,319.8 70.0,326.0 70.2,332.2 70.5,338.5 70.9,344.8 71.2,351.0 71.5,357.2 71.8,363.5 71.9,369.8 72.0,376.0 71.9,382.2 71.8,388.5 71.6,394.8 71.3,401.0 71.0,407.2 70.7,413.5 70.3,419.8 70.0,426.0 69.7,432.2 69.4,438.5 69.0,444.8 68.7,451.0 68.3,457.2 67.9,463.5 67.5,469.8 67.0,476.0 66.5,482.2 65.9,488.5 65.4,494.8 64.8,501.0 64.1,507.2 63.4,513.5 62.7,519.8 62.0,526.0 61.2,532.3 60.4,538.6 59.5,545.0 58.6,551.4 57.6,557.7 56.7,563.9 55.8,570.0 55.0,576.0 54.2,581.8 53.4,587.4 52.7,592.9 51.9,598.4 51.2,603.8 50.5,609.1 49.7,614.5 49.0,620.0 78.0,620.0 78.5,614.5 79.0,609.1 79.5,603.8 80.0,598.4 80.5,592.9 81.0,587.4 81.5,581.8 82.0,576.0 82.5,570.0 83.0,563.9 83.5,557.7 84.0,551.4 84.5,545.0 85.0,538.6 85.5,532.3 86.0,526.0 86.5,519.8 87.1,513.5 87.6,507.2 88.2,501.0 88.7,494.8 89.2,488.5 89.6,482.2 90.0,476.0 90.3,469.8 90.5,463.5 90.7,457.2 90.8,451.0 90.9,444.8 91.0,438.5 91.0,432.2 91.0,426.0 91.0,419.8 91.0,413.5 90.9,407.2 90.9,401.0 90.8,394.8 90.6,388.5 90.3,382.2 90.0,376.0 89.6,369.8 89.0,363.5 88.4,357.2 87.7,351.0 87.0,344.8 86.3,338.5 85.6,332.2 85.0,326.0 84.4,319.8 83.8,313.5 83.1,307.2 82.5,301.0 81.9,294.8 81.5,288.5 81.2,282.2 81.0,276.0 81.0,269.5 81.3,262.7 81.7,255.8 82.1,248.9 82.6,242.3 83.2,236.1 83.6,230.6 84.0,226.0 84.3,222.4 84.4,219.8 84.6,217.9 84.7,216.4 84.9,215.1 85.1,213.8 85.5,212.2 86.0,210.0 86.7,207.4 87.5,204.6 88.3,201.7 89.3,198.6" fill="#26282b" opacity="0.9"/>
<polyline points="65.0,200.0 64.4,203.0 63.9,205.8 63.5,208.5 63.1,211.4 62.8,214.4 62.5,217.8 62.3,221.6 62.0,226.0 61.8,231.1 61.6,236.8 61.4,243.0 61.2,249.5 61.1,256.2 61.1,262.9 61.0,269.6 61.0,276.0 61.0,282.2 61.1,288.5 61.2,294.8 61.3,301.0 61.5,307.2 61.6,313.5 61.8,319.8 62.0,326.0 62.2,332.2 62.5,338.5 62.9,344.8 63.2,351.0 63.5,357.2 63.8,363.5 63.9,369.8 64.0,376.0 63.9,382.2 63.8,388.5 63.6,394.8 63.3,401.0 63.0,407.2 62.7,413.5 62.3,419.8 62.0,426.0 61.7,432.2 61.4,438.5 61.0,444.8 60.7,451.0 60.3,457.2 59.9,463.5 59.5,469.8 59.0,476.0 58.5,482.2 57.9,488.5 57.4,494.8 56.8,501.0 56.1,507.2 55.4,513.5 54.7,519.8 54.0,526.0 53.2,532.3 52.4,538.6 51.5,545.0 50.6,551.4 49.6,557.7 48.7,563.9 47.8,570.0 47.0,576.0 46.2,581.8 45.4,587.4 44.7,592.9 43.9,598.4 43.2,603.8 42.5,609.1 41.7,614.5 41.0,620.0" fill="none" stroke="#3a3a3a" stroke-width="1.6"/>
<polyline points="66.5,200.0 65.9,203.0 65.4,205.8 65.0,208.5 64.6,211.4 64.3,214.4 64.0,217.8 63.8,221.6 63.5,226.0 63.3,231.1 63.1,236.8 62.9,243.0 62.8,249.5 62.6,256.2 62.6,262.9 62.5,269.6 62.5,276.0 62.5,282.2 62.6,288.5 62.7,294.8 62.8,301.0 63.0,307.2 63.1,313.5 63.3,319.8 63.5,326.0 63.7,332.2 64.0,338.5 64.4,344.8 64.7,351.0 65.0,357.2 65.3,363.5 65.4,369.8 65.5,376.0 65.4,382.2 65.3,388.5 65.1,394.8 64.8,401.0 64.5,407.2 64.2,413.5 63.8,419.8 63.5,426.0 63.2,432.2 62.9,438.5 62.5,444.8 62.2,451.0 61.8,457.2 61.4,463.5 61.0,469.8 60.5,476.0 60.0,482.2 59.4,488.5 58.9,494.8 58.2,501.0 57.6,507.2 56.9,513.5 56.2,519.8 55.5,526.0 54.7,532.3 53.9,538.6 53.0,545.0 52.1,551.4 51.1,557.7 50.2,563.9 49.3,570.0 48.5,576.0 47.7,581.8 46.9,587.4 46.2,592.9 45.4,598.4 44.7,603.8 44.0,609.1 43.2,614.5 42.5,620.0" fill="none" stroke="#b0b0b0" stroke-width="0.8" opacity="0.8"/>
<polygon points="156.0,-5.0 155.9,-2.5 155.8,0.1 155.8,2.6 155.7,5.2 155.6,7.7 155.5,10.2 155.3,12.6 155.0,15.0 154.7,17.3 154.3,19.4 153.8,21.6 153.3,23.6 152.8,25.7 152.2,27.8 151.6,29.8 151.0,32.0 150.4,34.2 149.7,36.4 149.0,38.7 148.3,40.9 147.6,43.2 146.8,45.5 145.9,47.7 145.0,50.0 144.0,52.2 143.1,54.4 142.0,56.6 140.9,58.8 139.8,61.0 138.6,63.2 137.3,65.6 136.0,68.0 134.6,70.6 133.0,73.3 131.4,76.0 129.8,78.9 128.1,81.7 126.3,84.5 124.7,87.3 123.0,90.0 121.4,92.6 119.7,95.3 118.0,97.9 116.4,100.4 114.7,103.0 113.1,105.4 111.5,107.8 110.0,110.0 108.5,112.0 107.2,113.9 105.9,115.6 104.6,117.2 103.3,118.9 101.9,120.7 100.5,122.7 99.0,125.0 97.4,127.6 95.7,130.5 93.9,133.6 92.1,136.8 90.3,140.1 88.5,143.4 86.7,146.8 85.0,150.0 83.3,153.2 81.5,156.5 79.8,159.8 78.1,163.1 76.4,166.4 74.8,169.6 73.3,172.8 72.0,176.0 70.8,179.1 69.7,182.1 68.8,185.1 67.9,188.0 67.1,190.9 66.3,193.9 65.6,196.9 65.0,200.0 89.3,198.6 90.4,195.5 91.5,192.3 92.7,189.2 94.0,186.0 95.4,182.8 96.9,179.5 98.6,176.1 100.3,172.8 102.1,169.4 103.8,166.1 105.4,163.0 107.0,160.0 108.5,157.2 109.8,154.6 111.2,152.1 112.5,149.8 113.8,147.4 115.2,145.0 116.5,142.6 118.0,140.0 119.5,137.4 121.0,134.7 122.5,132.1 124.1,129.4 125.7,126.6 127.4,123.8 129.1,121.0 131.0,118.0 133.1,114.9 135.3,111.7 137.6,108.5 140.1,105.1 142.5,101.8 144.8,98.5 147.0,95.2 149.0,92.0 150.8,88.9 152.6,85.7 154.2,82.6 155.8,79.5 157.3,76.5 158.6,73.5 159.9,70.7 161.0,68.0 162.0,65.5 162.8,63.2 163.6,61.1 164.2,59.1 164.7,57.0 165.2,54.9 165.6,52.5 166.0,50.0 166.3,47.2 166.6,44.4 166.8,41.4 166.9,38.2 166.9,35.0 167.0,31.8 167.0,28.4 167.0,25.0 167.0,21.5 166.9,17.9 166.8,14.1 166.6,10.3 166.5,6.5 166.3,2.6 166.1,-1.2 166.0,-5.0" fill="#1c1a18" opacity="0.38"/>
<polyline points="156.0,-5.0 155.9,-1.1 155.8,2.7 155.6,6.6 155.4,10.4 155.1,14.2 154.5,18.1 153.7,21.8 152.8,25.6 151.8,29.3 150.7,33.0 149.6,36.7 148.5,40.4 147.3,44.0 145.9,47.7 144.5,51.2 142.9,54.7 141.2,58.2 139.4,61.6 137.6,65.0 135.8,68.4 133.9,71.8 132.0,75.1 130.0,78.4 128.0,81.7 126.0,85.0 124.0,88.3 122.0,91.6 119.9,94.9 117.9,98.1 115.8,101.4 113.7,104.6 111.5,107.8 109.3,110.9 107.0,114.0 104.7,117.1 102.3,120.1 100.1,123.3 98.0,126.6 96.1,129.9 94.1,133.2 92.3,136.6 90.4,139.9 88.6,143.3 86.7,146.7 84.9,150.1 83.1,153.5 81.3,156.9 79.5,160.3 77.7,163.8 76.0,167.2 74.3,170.7 72.8,174.2 71.3,177.8 70.0,181.4 68.8,185.1 67.7,188.8 66.7,192.5 65.8,196.2 65.0,200.0" fill="none" stroke="#1d1f21" stroke-width="1.6"/>
<polyline points="159.0,-5.0 158.9,-1.2 158.9,2.7 158.9,6.5 158.8,10.3 158.6,14.1 158.2,17.9 157.7,21.7 157.1,25.5 156.3,29.2 155.6,32.9 154.8,36.7 154.0,40.4 153.1,44.1 152.0,47.7 150.9,51.4 149.6,54.9 148.1,58.5 146.5,61.9 144.9,65.4 143.1,68.8 141.4,72.2 139.5,75.6 137.7,78.9 135.8,82.2 133.8,85.5 131.9,88.8 129.9,92.1 127.8,95.3 125.7,98.6 123.6,101.7 121.4,104.9 119.3,108.1 117.1,111.2 114.8,114.3 112.5,117.4 110.3,120.5 108.2,123.7 106.1,126.9 104.2,130.2 102.3,133.5 100.4,136.9 98.5,140.2 96.7,143.6 94.8,147.0 93.0,150.3 91.2,153.7 89.4,157.1 87.6,160.5 85.8,163.9 84.1,167.3 82.4,170.7 80.8,174.2 79.3,177.7 77.9,181.3 76.5,184.9 75.3,188.5 74.2,192.2 73.2,195.9 72.3,199.6" fill="none" stroke="#1d1f21" stroke-width="1.3"/>
<polyline points="161.5,-5.0 161.5,-1.2 161.6,2.6 161.6,6.4 161.6,10.3 161.5,14.1 161.3,17.9 161.0,21.6 160.6,25.4 160.1,29.1 159.7,32.9 159.1,36.6 158.6,40.4 157.9,44.1 157.1,47.8 156.2,51.5 155.1,55.1 153.8,58.7 152.4,62.2 150.9,65.7 149.3,69.1 147.6,72.6 145.8,75.9 144.1,79.3 142.2,82.7 140.3,86.0 138.4,89.3 136.4,92.5 134.4,95.7 132.3,98.9 130.1,102.1 127.9,105.2 125.8,108.3 123.6,111.5 121.3,114.6 119.1,117.6 116.9,120.8 114.9,124.0 112.9,127.2 110.9,130.5 109.0,133.8 107.2,137.2 105.3,140.5 103.4,143.8 101.6,147.2 99.8,150.5 98.0,153.9 96.2,157.2 94.4,160.6 92.6,164.0 90.9,167.4 89.2,170.8 87.5,174.2 85.9,177.7 84.4,181.2 83.0,184.7 81.7,188.3 80.5,191.9 79.4,195.6 78.4,199.2" fill="none" stroke="#1d1f21" stroke-width="1.3"/>
<polyline points="164.0,-5.0 164.1,-1.2 164.2,2.6 164.3,6.4 164.4,10.2 164.4,14.0 164.4,17.8 164.3,21.5 164.2,25.3 164.0,29.1 163.7,32.9 163.5,36.6 163.1,40.4 162.7,44.1 162.2,47.9 161.5,51.6 160.6,55.3 159.6,58.9 158.3,62.5 156.9,66.0 155.4,69.5 153.8,72.9 152.2,76.3 150.4,79.7 148.7,83.1 146.8,86.4 144.9,89.7 143.0,92.9 140.9,96.1 138.8,99.3 136.6,102.4 134.4,105.5 132.2,108.6 130.0,111.7 127.8,114.8 125.7,117.9 123.6,121.1 121.6,124.3 119.6,127.5 117.7,130.8 115.8,134.1 113.9,137.4 112.1,140.7 110.2,144.0 108.3,147.3 106.5,150.7 104.7,154.0 102.9,157.4 101.2,160.7 99.4,164.1 97.6,167.5 95.9,170.8 94.2,174.2 92.6,177.7 91.0,181.1 89.5,184.6 88.1,188.1 86.8,191.7 85.6,195.3 84.5,198.9" fill="none" stroke="#1d1f21" stroke-width="1.4"/>
<polyline points="166.0,-5.0 166.1,-1.2 166.3,2.6 166.5,6.3 166.6,10.1 166.8,13.9 166.9,17.7 167.0,21.5 167.0,25.2 167.0,29.0 167.0,32.8 166.9,36.6 166.8,40.4 166.6,44.2 166.2,47.9 165.7,51.7 165.1,55.4 164.2,59.1 163.0,62.7 161.7,66.2 160.3,69.7 158.8,73.2 157.2,76.6 155.5,80.0 153.8,83.4 152.0,86.7 150.2,90.0 148.2,93.3 146.2,96.4 144.0,99.6 141.8,102.7 139.6,105.7 137.4,108.8 135.2,111.9 133.0,115.0 130.9,118.1 128.9,121.3 126.9,124.5 125.0,127.8 123.1,131.1 121.2,134.3 119.3,137.6 117.5,140.9 115.6,144.2 113.7,147.5 111.9,150.8 110.1,154.1 108.3,157.5 106.6,160.8 104.8,164.2 103.0,167.5 101.3,170.9 99.6,174.2 97.9,177.6 96.2,181.0 94.7,184.5 93.2,188.0 91.8,191.5 90.5,195.0 89.3,198.6" fill="none" stroke="#1d1f21" stroke-width="2.8"/>
<line x1="155.4" y1="10.4" x2="166.6" y2="10.1" stroke="#1d1f21" stroke-width="1.4"/>
<line x1="151.8" y1="29.3" x2="167.0" y2="29.0" stroke="#1d1f21" stroke-width="1.4"/>
<line x1="145.9" y1="47.7" x2="166.2" y2="47.9" stroke="#1d1f21" stroke-width="1.4"/>
<line x1="137.6" y1="65.0" x2="161.7" y2="66.2" stroke="#1d1f21" stroke-width="1.4"/>
<line x1="128.0" y1="81.7" x2="153.8" y2="83.4" stroke="#1d1f21" stroke-width="1.4"/>
<line x1="117.9" y1="98.1" x2="144.0" y2="99.6" stroke="#1d1f21" stroke-width="1.4"/>
<line x1="107.0" y1="114.0" x2="133.0" y2="115.0" stroke="#1d1f21" stroke-width="1.4"/>
<line x1="96.1" y1="129.9" x2="123.1" y2="131.1" stroke="#1d1f21" stroke-width="1.4"/>
<line x1="86.7" y1="146.7" x2="113.7" y2="147.5" stroke="#1d1f21" stroke-width="1.4"/>
<line x1="77.7" y1="163.8" x2="104.8" y2="164.2" stroke="#1d1f21" stroke-width="1.4"/>
<line x1="70.0" y1="181.4" x2="96.2" y2="181.0" stroke="#1d1f21" stroke-width="1.4"/>
<line x1="65.0" y1="200.0" x2="89.3" y2="198.6" stroke="#1d1f21" stroke-width="1.4"/>
<ellipse cx="82" cy="420" rx="6" ry="9" fill="#17191b"/>
<ellipse cx="182" cy="268" rx="8" ry="5" fill="#b0b2b4"/><line x1="182" y1="270" x2="186" y2="292" stroke="#8a8c8e" stroke-width="1.5"/><ellipse cx="166" cy="290" rx="6" ry="10" fill="#2a2c2e" opacity="0.8"/>
<ellipse cx="192" cy="341" rx="6.5" ry="15" fill="#1c1e20"/><ellipse cx="191" cy="326" rx="3" ry="3.5" fill="#1c1e20"/><ellipse cx="194" cy="362" rx="4" ry="5" fill="#5a5c5e" opacity="0.6"/>
<ellipse cx="279" cy="313" rx="7.5" ry="16" fill="#1c1e20"/><ellipse cx="292" cy="300" rx="4" ry="5" fill="#2a2c2e"/><path d="M276,330 h18 M285,318 v16" stroke="#d8d8d8" stroke-width="1.2"/>
<defs><clipPath id="pitclip"><polygon points="330.0,313.0 324.9,316.5 319.8,319.8 314.5,322.9 309.3,326.1 304.1,329.3 298.9,332.7 293.9,336.2 289.0,340.1 284.4,344.3 280.0,349.0 275.8,354.3 271.5,360.2 267.4,366.6 263.4,373.3 259.6,380.1 256.0,387.0 252.7,393.8 249.8,400.3 247.2,406.4 245.0,412.0 243.3,417.0 241.9,421.6 241.0,425.9 240.3,430.0 239.9,433.9 239.8,437.7 239.9,441.5 240.2,445.5 240.5,449.6 241.0,454.0 241.6,458.7 242.4,463.6 243.4,468.7 244.6,473.9 246.0,479.1 247.5,484.3 249.2,489.3 251.0,494.2 253.0,498.8 255.0,503.0 257.2,507.0 259.6,510.8 262.1,514.5 264.8,518.0 267.6,521.3 270.5,524.5 273.5,527.4 276.6,530.2 279.8,532.7 283.0,535.0 286.3,537.0 289.9,538.8 293.5,540.3 297.3,541.5 301.1,542.6 305.0,543.6 308.8,544.5 312.6,545.3 316.4,546.1 320.0,547.0 323.5,547.8 326.8,548.6 330.0,549.2 333.1,549.8 336.3,550.3 339.5,550.8 342.9,551.3 346.4,551.8 350.0,552.4 354.0,553.0 358.1,553.7 362.4,554.5 366.8,555.3 371.3,556.2 375.9,557.1 380.8,557.9 385.8,558.6 391.0,559.2 396.4,559.7 402.0,560.0 407.9,560.2 414.2,560.4 420.8,560.5 427.5,560.5 434.4,560.4 441.4,560.1 448.4,559.7 455.4,559.0 462.3,558.2 469.0,557.0 475.7,555.6 482.5,554.0 489.4,552.1 496.3,550.1 503.2,547.8 509.9,545.4 516.4,542.8 522.6,540.0 528.5,537.1 534.0,534.0 539.1,530.7 544.0,527.2 548.6,523.6 553.0,519.7 557.1,515.7 561.0,511.5 564.6,507.3 568.0,502.9 571.1,498.5 574.0,494.0 576.6,489.4 578.9,484.6 580.9,479.7 582.7,474.7 584.2,469.6 585.5,464.5 586.6,459.3 587.6,454.2 588.3,449.0 589.0,444.0 589.5,439.0 589.8,433.9 589.8,428.8 589.7,423.7 589.4,418.6 589.0,413.6 588.4,408.6 587.7,403.6 586.9,398.8 586.0,394.0 585.0,389.3 584.0,384.7 582.9,380.2 581.7,375.7 580.3,371.2 578.8,366.9 577.0,362.6 574.9,358.3 572.6,354.1 570.0,350.0 567.1,345.9 563.9,341.7 560.4,337.5 556.7,333.4 552.8,329.3 548.6,325.4 544.2,321.7 539.7,318.2 534.9,314.9 530.0,312.0 524.9,309.4 519.4,307.0 513.8,304.9 507.9,303.0 501.9,301.3 495.7,299.8 489.4,298.4 483.0,297.2 476.5,296.0 470.0,295.0 463.4,294.0 456.6,293.1 449.7,292.3 442.7,291.6 435.6,291.1 428.5,290.8 421.3,290.7 414.2,290.8 407.0,291.3 400.0,292.0 393.0,293.1 386.0,294.7 379.0,296.5 372.0,298.7 365.0,301.0 358.0,303.4 351.0,305.9 344.0,308.4 337.0,310.8 330.0,313.0"/></clipPath><clipPath id="belowmenu"><path d="M0,0 H413 V395 H745 V614 H0 Z"/></clipPath></defs>
<g clip-path="url(#belowmenu)">
<rect x="440" y="380" width="310" height="240" fill="#434547"/>
<ellipse cx="520" cy="598" rx="70" ry="26" fill="#808183" filter="url(#b10)"/>
<ellipse cx="612" cy="425" rx="34" ry="34" fill="#5e6062" filter="url(#b10)"/>
<ellipse cx="655" cy="540" rx="28" ry="70" fill="#3c3e40" filter="url(#b10)"/>
<polygon points="330.0,335.0 324.9,338.5 319.8,341.8 314.5,344.9 309.3,348.1 304.1,351.3 298.9,354.7 293.9,358.2 289.0,362.1 284.4,366.3 280.0,371.0 275.8,376.3 271.5,382.2 267.4,388.6 263.4,395.3 259.6,402.1 256.0,409.0 252.7,415.8 249.8,422.3 247.2,428.4 245.0,434.0 243.3,439.0 241.9,443.6 241.0,447.9 240.3,452.0 239.9,455.9 239.8,459.7 239.9,463.5 240.2,467.5 240.5,471.6 241.0,476.0 241.6,480.7 242.4,485.6 243.4,490.7 244.6,495.9 246.0,501.1 247.5,506.3 249.2,511.3 251.0,516.2 253.0,520.8 255.0,525.0 257.2,529.0 259.6,532.8 262.1,536.5 264.8,540.0 267.6,543.3 270.5,546.5 273.5,549.4 276.6,552.2 279.8,554.7 283.0,557.0 286.3,559.0 289.9,560.8 293.5,562.3 297.3,563.5 301.1,564.6 305.0,565.6 308.8,566.5 312.6,567.3 316.4,568.1 320.0,569.0 323.5,569.8 326.8,570.6 330.0,571.2 333.1,571.8 336.3,572.3 339.5,572.8 342.9,573.3 346.4,573.8 350.0,574.4 354.0,575.0 358.1,575.7 362.4,576.5 366.8,577.3 371.3,578.2 375.9,579.1 380.8,579.9 385.8,580.6 391.0,581.2 396.4,581.7 402.0,582.0 407.9,582.2 414.2,582.4 420.8,582.5 427.5,582.5 434.4,582.4 441.4,582.1 448.4,581.7 455.4,581.0 462.3,580.2 469.0,579.0 475.7,577.6 482.5,576.0 489.4,574.1 496.3,572.1 503.2,569.8 509.9,567.4 516.4,564.8 522.6,562.0 528.5,559.1 534.0,556.0 539.1,552.7 544.0,549.2 548.6,545.6 553.0,541.7 557.1,537.7 561.0,533.5 564.6,529.3 568.0,524.9 571.1,520.5 574.0,516.0 576.6,511.4 578.9,506.6 580.9,501.7 582.7,496.7 584.2,491.6 585.5,486.5 586.6,481.3 587.6,476.2 588.3,471.0 589.0,466.0 589.5,461.0 589.8,455.9 589.8,450.8 589.7,445.7 589.4,440.6 589.0,435.6 588.4,430.6 587.7,425.6 586.9,420.8 586.0,416.0 585.0,411.3 584.0,406.7 582.9,402.2 581.7,397.7 580.3,393.2 578.8,388.9 577.0,384.6 574.9,380.3 572.6,376.1 570.0,372.0 567.1,367.9 563.9,363.7 560.4,359.5 556.7,355.4 552.8,351.3 548.6,347.4 544.2,343.7 539.7,340.2 534.9,336.9 530.0,334.0 524.9,331.4 519.4,329.0 513.8,326.9 507.9,325.0 501.9,323.3 495.7,321.8 489.4,320.4 483.0,319.2 476.5,318.0 470.0,317.0 463.4,316.0 456.6,315.1 449.7,314.3 442.7,313.6 435.6,313.1 428.5,312.8 421.3,312.7 414.2,312.8 407.0,313.3 400.0,314.0 393.0,315.1 386.0,316.7 379.0,318.5 372.0,320.7 365.0,323.0 358.0,325.4 351.0,327.9 344.0,330.4 337.0,332.8 330.0,335.0" fill="#606366"/>
<polygon points="330.0,313.0 324.9,316.5 319.8,319.8 314.5,322.9 309.3,326.1 304.1,329.3 298.9,332.7 293.9,336.2 289.0,340.1 284.4,344.3 280.0,349.0 275.8,354.3 271.5,360.2 267.4,366.6 263.4,373.3 259.6,380.1 256.0,387.0 252.7,393.8 249.8,400.3 247.2,406.4 245.0,412.0 243.3,417.0 241.9,421.6 241.0,425.9 240.3,430.0 239.9,433.9 239.8,437.7 239.9,441.5 240.2,445.5 240.5,449.6 241.0,454.0 241.6,458.7 242.4,463.6 243.4,468.7 244.6,473.9 246.0,479.1 247.5,484.3 249.2,489.3 251.0,494.2 253.0,498.8 255.0,503.0 257.2,507.0 259.6,510.8 262.1,514.5 264.8,518.0 267.6,521.3 270.5,524.5 273.5,527.4 276.6,530.2 279.8,532.7 283.0,535.0 286.3,537.0 289.9,538.8 293.5,540.3 297.3,541.5 301.1,542.6 305.0,543.6 308.8,544.5 312.6,545.3 316.4,546.1 320.0,547.0 323.5,547.8 326.8,548.6 330.0,549.2 333.1,549.8 336.3,550.3 339.5,550.8 342.9,551.3 346.4,551.8 350.0,552.4 354.0,553.0 358.1,553.7 362.4,554.5 366.8,555.3 371.3,556.2 375.9,557.1 380.8,557.9 385.8,558.6 391.0,559.2 396.4,559.7 402.0,560.0 407.9,560.2 414.2,560.4 420.8,560.5 427.5,560.5 434.4,560.4 441.4,560.1 448.4,559.7 455.4,559.0 462.3,558.2 469.0,557.0 475.7,555.6 482.5,554.0 489.4,552.1 496.3,550.1 503.2,547.8 509.9,545.4 516.4,542.8 522.6,540.0 528.5,537.1 534.0,534.0 539.1,530.7 544.0,527.2 548.6,523.6 553.0,519.7 557.1,515.7 561.0,511.5 564.6,507.3 568.0,502.9 571.1,498.5 574.0,494.0 576.6,489.4 578.9,484.6 580.9,479.7 582.7,474.7 584.2,469.6 585.5,464.5 586.6,459.3 587.6,454.2 588.3,449.0 589.0,444.0 589.5,439.0 589.8,433.9 589.8,428.8 589.7,423.7 589.4,418.6 589.0,413.6 588.4,408.6 587.7,403.6 586.9,398.8 586.0,394.0 585.0,389.3 584.0,384.7 582.9,380.2 581.7,375.7 580.3,371.2 578.8,366.9 577.0,362.6 574.9,358.3 572.6,354.1 570.0,350.0 567.1,345.9 563.9,341.7 560.4,337.5 556.7,333.4 552.8,329.3 548.6,325.4 544.2,321.7 539.7,318.2 534.9,314.9 530.0,312.0 524.9,309.4 519.4,307.0 513.8,304.9 507.9,303.0 501.9,301.3 495.7,299.8 489.4,298.4 483.0,297.2 476.5,296.0 470.0,295.0 463.4,294.0 456.6,293.1 449.7,292.3 442.7,291.6 435.6,291.1 428.5,290.8 421.3,290.7 414.2,290.8 407.0,291.3 400.0,292.0 393.0,293.1 386.0,294.7 379.0,296.5 372.0,298.7 365.0,301.0 358.0,303.4 351.0,305.9 344.0,308.4 337.0,310.8 330.0,313.0" fill="#65686c"/>
<g clip-path="url(#pitclip)">
<polygon points="316.0,344.0 312.1,347.0 308.1,350.0 304.0,353.0 300.0,356.1 296.0,359.1 292.2,362.1 288.5,365.0 285.0,368.0 281.7,370.9 278.4,373.9 275.2,376.8 272.2,379.7 269.3,382.6 266.6,385.4 264.2,388.2 262.0,391.0 260.1,393.7 258.4,396.4 256.9,399.0 255.7,401.6 254.6,404.2 253.6,406.8 252.8,409.4 252.0,412.0 251.3,414.6 250.8,417.1 250.5,419.6 250.2,422.1 250.1,424.7 250.0,427.3 250.0,430.1 250.0,433.0 250.0,436.1 250.1,439.4 250.3,442.9 250.6,446.4 250.9,450.0 251.2,453.5 251.6,456.8 252.0,460.0 252.5,463.0 252.9,465.9 253.5,468.7 254.1,471.4 254.7,474.0 255.4,476.7 256.2,479.3 257.0,482.0 257.9,484.6 258.8,487.1 259.7,489.5 260.8,491.9 261.9,494.4 263.1,497.0 264.5,499.9 266.0,503.0 267.6,506.6 269.2,510.7 270.9,515.1 272.8,519.6 274.8,524.0 277.2,528.1 279.9,531.9 283.0,535.0 286.7,537.5 290.9,539.5 295.5,541.2 300.4,542.6 305.5,543.8 310.5,544.9 315.4,545.9 320.0,547.0 324.3,548.0 328.4,548.9 332.4,549.6 336.3,550.3 340.4,550.9 344.6,551.6 349.1,552.2 354.0,553.0 359.2,553.9 364.6,554.9 370.1,556.0 375.9,557.1 382.0,558.1 388.3,558.9 395.0,559.6 402.0,560.0 409.5,560.2 417.5,560.4 425.8,560.5 434.4,560.4 443.2,560.0 451.9,559.4 460.6,558.4 469.0,557.0 477.4,555.2 486.0,553.1 494.6,550.6 503.2,547.8 511.5,544.7 519.6,541.4 527.1,537.8 534.0,534.0 540.4,529.9 546.3,525.4 551.9,520.7 557.1,515.7 561.9,510.5 566.3,505.1 570.4,499.6 574.0,494.0 577.2,488.2 579.9,482.2 582.2,476.0 584.2,469.6 585.8,463.2 587.1,456.7 588.2,450.3 589.0,444.0 589.6,437.7 589.8,431.4 589.8,425.0 589.4,418.6 588.9,412.3 588.1,406.1 587.1,400.0 586.0,394.0 584.8,388.2 583.5,382.4 582.0,376.8 580.3,371.2 578.3,365.8 576.0,360.4 573.2,355.2 570.0,350.0 566.3,344.8 562.2,339.6 557.6,334.4 552.8,329.3 547.5,324.4 542.0,319.9 536.1,315.7 530.0,312.0 523.5,308.8 516.6,305.9 509.4,303.5 501.9,301.3 494.1,299.4 486.2,297.8 478.1,296.3 470.0,295.0 461.6,293.8 452.7,292.6 443.6,291.6 434.4,290.8 425.2,290.4 416.3,290.4 407.9,290.9 400.0,292.0 392.7,293.9 385.7,296.5 379.1,299.6 372.8,303.2 366.7,307.0 360.9,310.8 355.3,314.6 350.0,318.0 345.0,321.2 340.4,324.5 336.1,327.8 332.0,331.0 328.0,334.2 324.1,337.5 320.1,340.8 316.0,344.0" fill="#14171a"/>
<ellipse cx="405" cy="508" rx="160" ry="68" fill="#6a503a" filter="url(#b4)"/>
<ellipse cx="512" cy="510" rx="34" ry="28" fill="#80603f" filter="url(#b10)"/>
<ellipse cx="380" cy="490" rx="24" ry="50" fill="#7c5e44" filter="url(#b4)"/>
<ellipse cx="450" cy="400" rx="120" ry="45" fill="#14171a" filter="url(#b4)"/>
<polygon points="456,392 514,392 492,440 404,520 372,556 350,548 372,505 404,474 456,440" fill="#1d1e20"/>
<g stroke="#8e9092" stroke-width="1.2" opacity="0.9"><line x1="462" y1="402" x2="490" y2="420"/><line x1="458" y1="412" x2="482" y2="430"/><line x1="458" y1="424" x2="474" y2="438"/><line x1="470" y1="398" x2="496" y2="410"/></g>
<path d="M297,452 Q270,484 266,522 Q278,536 294,542 Z" fill="#d9a373"/>
<path d="M297,452 Q280,470 272,496 L292,502 Z" fill="#ecc39c" filter="url(#b2)"/>
<ellipse cx="367" cy="424" rx="10" ry="5" fill="#e6a878" filter="url(#b1)"/>
<path d="M489,439 Q526,454 545,500" stroke="#d98850" stroke-width="17" fill="none" stroke-linecap="round" filter="url(#b4)" opacity="0.75"/>
<path d="M489,439 Q526,454 545,500" stroke="#eea066" stroke-width="11.5" fill="none" stroke-linecap="round" filter="url(#b2)"/>
<path d="M491,440.5 Q525,456 543.5,497" stroke="#ffdcbc" stroke-width="5.5" fill="none" stroke-linecap="round" filter="url(#b1)"/>
<rect x="516" y="396" width="3" height="14" fill="#d09a6a"/>
</g>
<polygon points="330.0,313.0 324.9,316.5 319.8,319.8 314.5,322.9 309.3,326.1 304.1,329.3 298.9,332.7 293.9,336.2 289.0,340.1 284.4,344.3 280.0,349.0 275.8,354.3 271.5,360.2 267.4,366.6 263.4,373.3 259.6,380.1 256.0,387.0 252.7,393.8 249.8,400.3 247.2,406.4 245.0,412.0 243.3,417.0 241.9,421.6 241.0,425.9 240.3,430.0 239.9,433.9 239.8,437.7 239.9,441.5 240.2,445.5 240.5,449.6 241.0,454.0 241.6,458.7 242.4,463.6 243.4,468.7 244.6,473.9 246.0,479.1 247.5,484.3 249.2,489.3 251.0,494.2 253.0,498.8 255.0,503.0 257.2,507.0 259.6,510.8 262.1,514.5 264.8,518.0 267.6,521.3 270.5,524.5 273.5,527.4 276.6,530.2 279.8,532.7 283.0,535.0 286.3,537.0 289.9,538.8 293.5,540.3 297.3,541.5 301.1,542.6 305.0,543.6 308.8,544.5 312.6,545.3 316.4,546.1 320.0,547.0 323.5,547.8 326.8,548.6 330.0,549.2 333.1,549.8 336.3,550.3 339.5,550.8 342.9,551.3 346.4,551.8 350.0,552.4 354.0,553.0 358.1,553.7 362.4,554.5 366.8,555.3 371.3,556.2 375.9,557.1 380.8,557.9 385.8,558.6 391.0,559.2 396.4,559.7 402.0,560.0 407.9,560.2 414.2,560.4 420.8,560.5 427.5,560.5 434.4,560.4 441.4,560.1 448.4,559.7 455.4,559.0 462.3,558.2 469.0,557.0 475.7,555.6 482.5,554.0 489.4,552.1 496.3,550.1 503.2,547.8 509.9,545.4 516.4,542.8 522.6,540.0 528.5,537.1 534.0,534.0 539.1,530.7 544.0,527.2 548.6,523.6 553.0,519.7 557.1,515.7 561.0,511.5 564.6,507.3 568.0,502.9 571.1,498.5 574.0,494.0 576.6,489.4 578.9,484.6 580.9,479.7 582.7,474.7 584.2,469.6 585.5,464.5 586.6,459.3 587.6,454.2 588.3,449.0 589.0,444.0 589.5,439.0 589.8,433.9 589.8,428.8 589.7,423.7 589.4,418.6 589.0,413.6 588.4,408.6 587.7,403.6 586.9,398.8 586.0,394.0 585.0,389.3 584.0,384.7 582.9,380.2 581.7,375.7 580.3,371.2 578.8,366.9 577.0,362.6 574.9,358.3 572.6,354.1 570.0,350.0 567.1,345.9 563.9,341.7 560.4,337.5 556.7,333.4 552.8,329.3 548.6,325.4 544.2,321.7 539.7,318.2 534.9,314.9 530.0,312.0 524.9,309.4 519.4,307.0 513.8,304.9 507.9,303.0 501.9,301.3 495.7,299.8 489.4,298.4 483.0,297.2 476.5,296.0 470.0,295.0 463.4,294.0 456.6,293.1 449.7,292.3 442.7,291.6 435.6,291.1 428.5,290.8 421.3,290.7 414.2,290.8 407.0,291.3 400.0,292.0 393.0,293.1 386.0,294.7 379.0,296.5 372.0,298.7 365.0,301.0 358.0,303.4 351.0,305.9 344.0,308.4 337.0,310.8 330.0,313.0" fill="none" stroke="#a8acb0" stroke-width="1.3"/>
<rect x="358" y="258" width="45" height="64" fill="url(#gpanel)"/>
<path d="M358,290 Q380,284 403,288" stroke="#c0c4c8" stroke-width="2" fill="none"/>
<path d="M358,324 Q380,316 403,320 L403,328 Q380,324 358,332 Z" fill="#5a5c5e"/>
<polygon points="352,575 403,582 403,620 350,620" fill="#5c5e60"/>
<polygon points="319,254 329,256 318,396 312,394 295,620 276,620 300,394 305,396" fill="#2c2f32"/>
<polygon points="321,256 326,256 300,620 289,620" fill="#aeb2b6" opacity="0.9"/>
<polygon points="329,256 354,258 345,394 338,620 295,620 312,394" fill="url(#gsteps)"/>
<polygon points="354,260 360,260 356,394 351,620 338,620 345,394" fill="#2c2f32"/>
<polygon points="355.5,262 358.5,262 352.5,620 346.5,620" fill="#b4b8bc" opacity="0.85"/>
<ellipse cx="346" cy="290" rx="7" ry="21" fill="#1a1c1e"/>
<rect x="401" y="270" width="11" height="350" fill="#bcc0c4"/><rect x="401" y="270" width="2" height="350" fill="#34363a"/><rect x="410" y="270" width="2" height="350" fill="#4a4c50"/>
<defs><linearGradient id="gsteps2" x1="0" y1="380" x2="0" y2="620" gradientUnits="userSpaceOnUse"><stop offset="0" stop-color="#7c7e80"/><stop offset="0.4" stop-color="#5c5e60"/><stop offset="1" stop-color="#505254"/></linearGradient></defs>
<polygon points="412,380 444,380 447,620 412,620" fill="url(#gsteps2)"/>
<g stroke="#3a3c3e" stroke-width="1" opacity="0.7"><line x1="412" y1="400" x2="447" y2="400"/><line x1="412" y1="409" x2="447" y2="409"/><line x1="412" y1="418" x2="447" y2="418"/><line x1="412" y1="427" x2="447" y2="427"/><line x1="412" y1="436" x2="447" y2="436"/><line x1="412" y1="445" x2="447" y2="445"/><line x1="412" y1="454" x2="447" y2="454"/><line x1="412" y1="463" x2="447" y2="463"/><line x1="412" y1="472" x2="447" y2="472"/><line x1="412" y1="481" x2="447" y2="481"/><line x1="412" y1="490" x2="447" y2="490"/><line x1="412" y1="499" x2="447" y2="499"/><line x1="412" y1="508" x2="447" y2="508"/><line x1="412" y1="517" x2="447" y2="517"/><line x1="412" y1="526" x2="447" y2="526"/><line x1="412" y1="535" x2="447" y2="535"/><line x1="412" y1="544" x2="447" y2="544"/><line x1="412" y1="553" x2="447" y2="553"/><line x1="412" y1="562" x2="447" y2="562"/><line x1="412" y1="571" x2="447" y2="571"/><line x1="412" y1="580" x2="447" y2="580"/><line x1="412" y1="589" x2="447" y2="589"/><line x1="412" y1="598" x2="447" y2="598"/><line x1="412" y1="607" x2="447" y2="607"/><line x1="412" y1="616" x2="447" y2="616"/></g>
<polygon points="440,380 456,380 471,620 444,620" fill="#3a3d40"/>
<polygon points="441,380 445,380 455,620 449,620" fill="#a4a8ac"/>
<ellipse cx="428" cy="438" rx="13" ry="19" fill="#16181a"/><ellipse cx="426" cy="462" rx="6" ry="15" fill="#16181a"/>
<ellipse cx="267" cy="545" rx="11" ry="10" fill="#b9babb" opacity="0.9"/><rect x="258" y="567" width="24" height="3" fill="#d4d4d4"/><rect x="268" y="558" width="3" height="20" fill="#d4d4d4"/>
<polygon points="472,607 540,597 550,620 472,620" fill="#1c1e20"/><polyline points="472,607 540,597 548,614" fill="none" stroke="#9a9c9e" stroke-width="1"/>
<ellipse cx="640" cy="455" rx="15" ry="24" fill="#1e2022"/><ellipse cx="630" cy="440" rx="5" ry="6" fill="#8a8c8e"/>
<ellipse cx="626" cy="495" rx="14" ry="12" fill="#727270"/><ellipse cx="630" cy="517" rx="15" ry="20" fill="#222426"/>
<ellipse cx="580" cy="572" rx="24" ry="30" fill="#1c1e20"/><ellipse cx="570" cy="548" rx="10" ry="8" fill="#4a3c30"/>
<rect x="612" y="564" width="17" height="18" rx="3" fill="#5e4838"/>
<path d="M679,380 Q688,430 687,480 Q686,550 668,620 L691,620 Q718,550 722,470 Q722,420 717,380 Z" fill="#aaaeb2"/>
<path d="M717,380 Q722,420 722,470 Q718,550 691,620 L750,620 L750,380 Z" fill="#3a322c"/>
<path d="M736,520 Q733,570 716,620 L750,620 L750,520 Z" fill="#b27446"/>
<path d="M741,396 Q745,480 728,560 Q720,590 708,620" stroke="#1c1c1c" stroke-width="2" fill="none"/>
</g>
<polygon points="108,160 420,214 420,256 112,199" fill="#cfc9be"/>
<g stroke="#b9b3a8" stroke-width="0.9"><line x1="150" y1="168" x2="155" y2="205"/><line x1="200" y1="177" x2="203" y2="213"/><line x1="250" y1="185" x2="252" y2="222"/><line x1="300" y1="194" x2="301" y2="231"/><line x1="350" y1="203" x2="350" y2="240"/><line x1="400" y1="211" x2="400" y2="249"/></g>
<polygon points="108,158.6 420,212.6 420,214.6 108,161" fill="#4a4a48"/>
<polygon points="110,123.4 420,171 420,172.4 110,125" fill="#55575a"/>
<polygon points="108,196 420,253.5 420,274 116,213" fill="#1b1d1f"/>
<rect x="235" y="236" width="5" height="4" fill="#e8e8e8"/>
<path d="M186,226 L246,238 L232,263 L205,256 Q184,272 168,302 L151,302 Q161,262 187,229 Z" fill="#1f2327"/>
<polygon points="205,236 222,240 216,262 204,258" fill="#8a8c8e"/>
<ellipse cx="203" cy="186" rx="3.5" ry="11" fill="#1a1c1e"/><ellipse cx="216" cy="209" rx="4" ry="6" fill="#1a1c1e"/><line x1="202" y1="194" x2="191" y2="208" stroke="#1a1c1e" stroke-width="1.5"/><rect x="388" y="176" width="8" height="32" fill="#2c2e30"/>
</g>
</g>
</svg>

<div class="abs" id="scroll"></div>
<div class="abs" id="scrollbtn"></div>
<div class="abs" id="thumb"></div>
<div class="abs" id="rcollapse"></div>
<div class="abs" id="rpane"></div>
<div class="abs" id="rsel"></div>

<!-- dropdown -->
<div class="abs" id="menu"></div>
<div class="t" style="left:1078.3px;top:268.37px;font-size:20px;color:#4b4b4b;letter-spacing:0.28px">Line</div>
<div class="t" style="left:1078.3px;top:310.47px;font-size:20px;color:#4b4b4b;letter-spacing:0.28px">Arrow</div>
<div class="t" style="left:1078.3px;top:352.47px;font-size:20px;color:#4b4b4b;letter-spacing:0.28px">Rectangle</div>
<div class="t" style="left:1078.3px;top:394.67px;font-size:20px;color:#4b4b4b;letter-spacing:0.28px">Oval</div>
<div class="t" style="left:1078.3px;top:436.77px;font-size:20px;color:#4b4b4b;letter-spacing:0.28px">Text Callout</div>
<div class="t" style="left:1078.3px;top:479.07px;font-size:20px;color:#4b4b4b;letter-spacing:0.28px">Polygon</div>
<div class="t" style="left:1078.3px;top:520.77px;font-size:20px;color:#4b4b4b;letter-spacing:0.28px">Cloud</div>
<div class="t" style="left:1078.3px;top:562.67px;font-size:20px;color:#4b4b4b;letter-spacing:0.28px">Connected Lines</div>
<div class="t" style="left:1078.3px;top:620.77px;font-size:20px;color:#4b4b4b;letter-spacing:0.28px">Expand Drawing Tools</div>
<div class="abs" style="left:1011px;top:600px;width:339px;height:1px;background:#d2d2d2"></div>
<svg id="menuicons" style="left:0;top:0" width="1494" height="878" viewBox="0 0 1494 878" fill="none" stroke-linejoin="round" stroke-linecap="round">
<!-- pane arrows -->
<path d="M9.5,563.5 L18,570.5 L9.5,577.5 Z" fill="#6e6e6e"/>
<path d="M1415.6,563 V578.2 L1406.5,570.6 Z" fill="#6e6e6e"/>
<!-- dropdown icons -->
<g stroke="#6a6a6a" stroke-width="2.8">
<rect x="1035.8" y="274.3" width="28.6" height="6.3" rx="0.8"/>
<path d="M1037.5,314.3 H1052 V309.6 L1066,319.9 L1052,330.2 V325.5 H1037.5 Z" stroke-linejoin="miter"/>
<rect x="1038.8" y="349.6" width="23.8" height="22.2" rx="0.8"/>
<circle cx="1051.3" cy="402.6" r="13"/>
<rect x="1034.4" y="436.5" width="20.4" height="18.2" rx="0.8"/>
<path d="M1039,441.8 H1050 M1039,445.5 H1050 M1039,449.2 H1050" stroke-width="1.3"/>
<path d="M1057,447.5 L1066.5,435 M1060.5,434.5 H1066.8 V441" stroke-width="1.7"/>
<polygon points="1065.3,487 1057.9,500 1043.3,500 1036,487 1043.3,474 1057.9,474"/>
<path d="M1033.9,527.2 C1034.5,524.6 1036.9,523.1 1039.8,520.6 C1042.7,518.1 1044.0,516.3 1047.2,515.6 C1050.4,514.9 1051.7,517.1 1054.6,517.2 C1057.5,517.3 1058.5,514.9 1060.6,516.1 C1062.7,517.3 1062.7,519.9 1064.3,522.8 C1065.9,525.7 1068.0,526.8 1068.0,529.4 C1068.0,532.0 1066.1,533.1 1064.3,534.6 C1062.5,536.1 1061.4,534.8 1059.8,536.4 C1058.2,538.0 1059.0,541.1 1056.9,541.8 C1054.8,542.5 1052.6,540.8 1050.2,539.8 C1047.8,538.8 1048.1,537.7 1045.7,537.4 C1043.3,537.1 1041.0,539.7 1039.1,538.6 C1037.2,537.5 1038.0,534.9 1036.9,532.4 C1035.8,529.9 1033.3,529.8 1033.9,527.2 Z"/>
<path d="M1065,570.6 L1059.8,557.8 L1044.4,557.8 L1035.6,571 L1043.6,584 L1059.2,572.4"/>
<path d="M1044,616 H1038.5 Q1037.2,616 1037.2,617.3 V622 M1058,642.4 H1063.5 Q1064.8,642.4 1064.8,641.1 V622.5 M1050.5,616 H1063.5 Q1064.8,616 1064.8,617.3"/>
<rect x="1037.2" y="630.4" width="11.6" height="12" rx="0.8"/>
</g>
<path d="M1049.5,621.5 H1059.5 V631.5 L1056,628 L1051.5,632.5 L1048.5,629.5 L1053,625 Z" fill="#6e6e6e"/>
<!-- ===== right pane icons ===== -->
<!-- 1 create pdf (red) -->
<path d="M1447.5,282.6 H1461 L1469,290.6 V308 Q1469,310.6 1466.4,310.6 H1447.5 Q1445.6,310.6 1445.6,308.6 V284.6 Q1445.6,282.6 1447.5,282.6 Z" fill="#f9d9d9" stroke="#d7373f" stroke-width="2.2"/>
<path d="M1450.5,301.5 Q1456.5,296.5 1456.2,288.8 Q1455.4,287.2 1454.6,288.8 Q1454.8,294.5 1463.5,298.2 Q1465,297.2 1463.5,296.8 Q1457,296.8 1450.5,301.5 Z" stroke="#d7373f" stroke-width="1.3"/>
<circle cx="1469.2" cy="307.1" r="10.2" fill="#fbfbfb"/><circle cx="1469.2" cy="307.1" r="8.6" fill="#d7373f"/>
<path d="M1464.4,307.1 H1474 M1469.2,302.3 V311.9" stroke="#fff" stroke-width="2.6" stroke-linecap="butt"/>
<!-- 2 combine (blue-violet) -->
<path d="M1462,347 H1471.5 L1478,353.5 V372 H1462 Z" fill="#5c5ce0"/>
<path d="M1471.5,347 V353.5 H1478 Z" fill="#fbfbfb" opacity="0.55"/>
<path d="M1445,347.2 H1459 Q1461,347.2 1461,349.2 V370.2 Q1461,372.2 1459,372.2 H1445 Q1443,372.2 1443,370.2 V349.2 Q1443,347.2 1445,347.2 Z" fill="#fbfbfb" stroke="#5c5ce0" stroke-width="2.4"/>
<path d="M1447.5,364.5 Q1452.3,360.5 1452,354.5 Q1451.5,353.2 1450.9,354.5 Q1451,359 1457.5,361.9 Q1458.6,361.1 1457.5,360.8 Q1452.5,360.8 1447.5,364.5 Z" stroke="#5c5ce0" stroke-width="1.2"/>
<path d="M1455.2,363.5 H1464.2 V373.5 H1470.8 L1459.7,384.6 L1448.6,373.5 H1455.2 Z" fill="#5c5ce0" stroke="#fbfbfb" stroke-width="1.6" stroke-linejoin="miter"/>
<!-- 3 organize (magenta) -->
<g stroke="#d0348e" stroke-width="2.4">
<rect x="1445.3" y="421.8" width="29.6" height="10.8" rx="1.6" fill="#f9d0e6"/>
<rect x="1445.3" y="439.8" width="12.6" height="10.8" rx="1.6" fill="#f9d0e6"/>
<path d="M1464,440.6 H1475.5 M1464,445.2 H1475.5 M1464,449.6 H1475.5" stroke-width="1.7" stroke-linecap="butt"/>
</g>
<!-- 4 export pdf (teal) -->
<path d="M1447.5,490 H1461 L1469,498 V515.4 Q1469,517.4 1467,517.4 H1447.5 Q1445.6,517.4 1445.6,515.4 V492 Q1445.6,490 1447.5,490 Z" fill="#c9e5e8" stroke="#1a8a92" stroke-width="2.3"/>
<path d="M1450.5,508.5 Q1456.5,503.5 1456.2,495.8 Q1455.4,494.2 1454.6,495.8 Q1454.8,501.5 1463.5,505.2 Q1465,504.2 1463.5,503.8 Q1457,503.8 1450.5,508.5 Z" stroke="#1a8a92" stroke-width="1.3"/>
<circle cx="1469.2" cy="514" r="10.2" fill="#fbfbfb"/><circle cx="1469.2" cy="514" r="8.6" fill="#1a8a92"/>
<path d="M1464,514 H1473.5 M1469.8,509.8 L1474,514 L1469.8,518.2" stroke="#fff" stroke-width="2.3" stroke-linecap="butt" stroke-linejoin="miter"/>
<!-- 5 compress (green) -->
<rect x="1463" y="560.6" width="12" height="26.4" rx="1.6" fill="#d9f0ca" stroke="#7cc657" stroke-width="2.4"/>
<path d="M1446.6,573.2 H1459 M1446.6,586.8 H1459 M1446.6,573.2 V586.8" stroke="#7cc657" stroke-width="2.4" stroke-dasharray="2.6 2.1" stroke-linecap="butt"/>
<path d="M1447,560 H1456 L1452.8,563.2 L1458.8,569.2 L1456.2,571.8 L1450.2,565.8 L1447,569 Z" fill="#7cc657"/>
<!-- 6 comment doc (yellow) -->
<path d="M1447,626.8 H1459.5 L1468,635.3 V653 Q1468,655.2 1466,655.2 H1447 Q1445.2,655.2 1445.2,653.2 V628.8 Q1445.2,626.8 1447,626.8 Z" fill="#f6eec4" stroke="#dcb818" stroke-width="2.3"/>
<path d="M1459.5,627 V635.3 H1468" stroke="#dcb818" stroke-width="2"/>
<path d="M1461.5,642.8 H1474.5 Q1476,642.8 1476,644.3 V653.2 Q1476,654.7 1474.5,654.7 H1468 L1464.5,658.6 V654.7 H1461.5 Q1460,654.7 1460,653.2 V644.3 Q1460,642.8 1461.5,642.8 Z" fill="#dcb818" stroke="#fbfbfb" stroke-width="1"/>
<path d="M1463.5,647 H1472.5 M1463.5,650.4 H1472.5" stroke="#fbf4cf" stroke-width="1.4" stroke-linecap="butt"/>
<!-- 7 comment (selected) -->
<path d="M1448,698.8 H1471.5 Q1473,698.8 1473,700.3 V717 Q1473,718.5 1471.5,718.5 H1462.5 L1455.5,726 V718.5 H1448 Q1446.5,718.5 1446.5,717 V700.3 Q1446.5,698.8 1448,698.8 Z" stroke="#fdf8dc" stroke-width="2.2"/>
<path d="M1451.5,705.5 H1468 M1451.5,711 H1464.5" stroke="#fdf8dc" stroke-width="2.2" stroke-linecap="butt"/>
<!-- 8 fill & sign (purple) -->
<path d="M1450.5,786 L1466.5,767.5 Q1468.8,765.5 1471,767.6 L1472.6,769.2 Q1474.6,771.6 1472.6,773.8 L1456.5,792 L1445.5,795.5 Q1443.6,795.8 1444.2,793.8 Z" fill="#e4d2f6" stroke="#8f4fd8" stroke-width="2.4"/>
<path d="M1449.5,787.5 L1455.5,793" stroke="#8f4fd8" stroke-width="1.6"/>
<path d="M1445,796 H1459 Q1463,791 1464,788.5 Q1465,786.8 1465.8,788.5 Q1466.2,794.5 1469,794.6 Q1470.8,794 1471.2,791.2 Q1472,794.6 1474,794.6 Q1476,794.4 1477.2,792" stroke="#8f4fd8" stroke-width="2.2"/>
<!-- 9 partial green -->
<path d="M1452.5,841.6 V836 H1462.5 L1468,841.6" stroke="#3aa548" stroke-width="2.6" stroke-linecap="butt" stroke-linejoin="miter"/>
<path d="M1458,836 V841.6" stroke="#3aa548" stroke-width="2" stroke-linecap="butt"/>
<path d="M1445,838.5 H1447.5 M1471.5,838.2 H1476.5 M1474,835.7 V840.7" stroke="#3aa548" stroke-width="1.6" stroke-linecap="butt"/>
<!-- chevron -->
<path d="M1451.2,855.2 L1460,862.8 L1468.8,855.2" stroke="#4e4e4e" stroke-width="2.8" stroke-linejoin="miter"/>
</svg>

<svg id="bluearrow" style="left:0;top:0" width="1494" height="878" viewBox="0 0 1494 878">
<polygon points="1022,352 900,372.8 573.2,431.5 575.4,418.4 530.8,450.7 583.6,463.4 577.5,452.4 900,382.5 1022.6,355.2" fill="#3a40cc"/>
</svg>
</body>
</html>
